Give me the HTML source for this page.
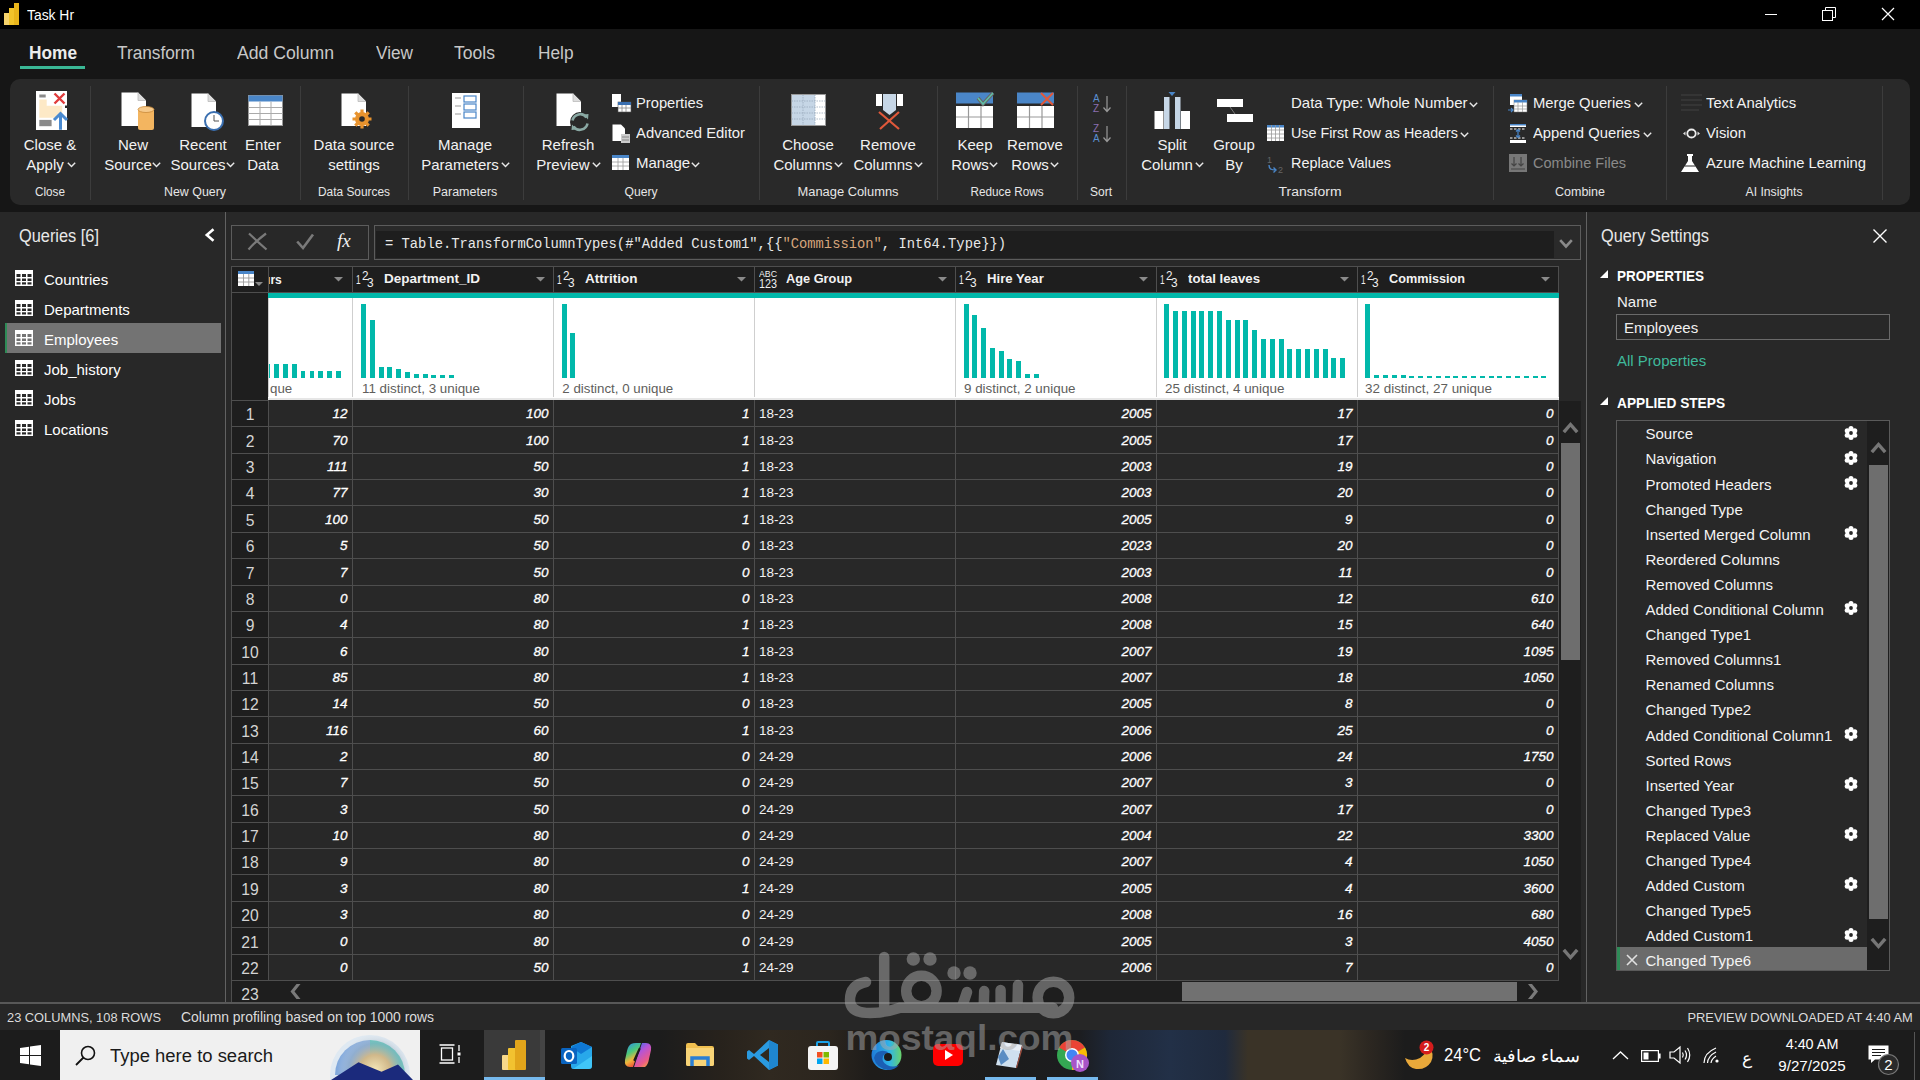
<!DOCTYPE html><html><head><meta charset="utf-8"><style>
*{margin:0;padding:0;box-sizing:border-box}
html,body{width:1920px;height:1080px;overflow:hidden;background:#282828;font-family:"Liberation Sans",sans-serif;}
.a{position:absolute}
.t{position:absolute;white-space:nowrap;line-height:1}
svg.a{overflow:visible}
</style></head><body>
<div class="a" style="left:0px;top:0px;width:1920px;height:29px;background:#000;"></div>
<svg class="a" style="left:3px;top:3px;" width="17" height="22" viewBox="0 0 17 22"><defs><linearGradient id="pbi" x1="0" y1="0" x2="1" y2="1"><stop offset="0" stop-color="#f2c811"/><stop offset="1" stop-color="#e8a30f"/></linearGradient></defs>
<rect x="1" y="10" width="5" height="12" fill="#f6d36b"/><rect x="6" y="5" width="5" height="17" fill="#f2c42a"/><rect x="11" y="0" width="5" height="22" fill="#e9b51b"/></svg>
<div class="t" style="top:8.15px;font-size:14px;color:#fff;left:27px;transform:scaleX(0.9906);transform-origin:left 50%;">Task Hr</div>
<div class="a" style="left:1765px;top:14px;width:12px;height:1px;background:#fff;"></div>
<svg class="a" style="left:1822px;top:7px;" width="14" height="14" viewBox="0 0 14 14"><rect x="0.5" y="3.5" width="10" height="10" fill="none" stroke="#fff" stroke-width="1"/><path d="M3.5 3.5V0.5H13.5V10.5H10.5" fill="none" stroke="#fff" stroke-width="1"/></svg>
<svg class="a" style="left:1882px;top:8px;" width="12" height="12" viewBox="0 0 12 12"><path d="M0 0L12 12M12 0L0 12" stroke="#fff" stroke-width="1.2"/></svg>
<div class="a" style="left:0px;top:29px;width:1920px;height:49px;background:#161616;"></div>
<div class="t" style="top:43.76px;font-size:18px;color:#ececec;font-weight:700;left:28.5px;transform:scaleX(0.9598);transform-origin:left 50%;">Home</div>
<div class="t" style="top:43.76px;font-size:18px;color:#c8c8c8;left:116.5px;transform:scaleX(0.9589);transform-origin:left 50%;">Transform</div>
<div class="t" style="top:43.76px;font-size:18px;color:#c8c8c8;left:236.5px;transform:scaleX(0.9793);transform-origin:left 50%;">Add Column</div>
<div class="t" style="top:43.76px;font-size:18px;color:#c8c8c8;left:376px;transform:scaleX(0.9563);transform-origin:left 50%;">View</div>
<div class="t" style="top:43.76px;font-size:18px;color:#c8c8c8;left:454px;transform:scaleX(0.9757);transform-origin:left 50%;">Tools</div>
<div class="t" style="top:43.76px;font-size:18px;color:#c8c8c8;left:537.5px;transform:scaleX(0.9590);transform-origin:left 50%;">Help</div>
<div class="a" style="left:20px;top:66px;width:65px;height:3px;background:#3ab795;"></div>
<div class="a" style="left:0px;top:78px;width:1920px;height:134px;background:#161616;"></div>
<div class="a" style="left:10px;top:79px;width:1900px;height:126px;background:#292929;border-radius:10px;"></div>
<div class="a" style="left:90px;top:86px;width:1px;height:114px;background:#3c3c3c;"></div>
<div class="a" style="left:300px;top:86px;width:1px;height:114px;background:#3c3c3c;"></div>
<div class="a" style="left:408px;top:86px;width:1px;height:114px;background:#3c3c3c;"></div>
<div class="a" style="left:523px;top:86px;width:1px;height:114px;background:#3c3c3c;"></div>
<div class="a" style="left:759px;top:86px;width:1px;height:114px;background:#3c3c3c;"></div>
<div class="a" style="left:937px;top:86px;width:1px;height:114px;background:#3c3c3c;"></div>
<div class="a" style="left:1077px;top:86px;width:1px;height:114px;background:#3c3c3c;"></div>
<div class="a" style="left:1126px;top:86px;width:1px;height:114px;background:#3c3c3c;"></div>
<div class="a" style="left:1493px;top:86px;width:1px;height:114px;background:#3c3c3c;"></div>
<div class="a" style="left:1666px;top:86px;width:1px;height:114px;background:#3c3c3c;"></div>
<div class="a" style="left:1882px;top:86px;width:1px;height:114px;background:#3c3c3c;"></div>
<svg class="a" style="left:36px;top:91px;" width="32" height="39" viewBox="0 0 32 39"><path d="M0 0H31V14.5H29V17H31V39H0Z" fill="#fff"/>
<rect x="3.3" y="3.5" width="6.4" height="3" fill="#8a8a8a"/><path d="M3.3 8.5H10.7V14.8H26.2V26.8H3.3Z" fill="#fde9c6"/>
<rect x="3.3" y="28.9" width="12.3" height="6.3" fill="#8a8a8a"/>
<path d="M18.5 2.5L28.5 12.5M28.5 2.5L18.5 12.5" stroke="#e03c3c" stroke-width="2.4"/>
<path d="M24.5 38.7V23.5M18 29L24.5 22.5L31 29" stroke="#4a8ad0" stroke-width="3" fill="none"/></svg>
<div class="t" style="top:137.20px;font-size:15px;color:#f2f2f2;left:50px;transform:translateX(-50%);transform-origin:center 50%;">Close &amp;</div>
<div class="t" style="top:157.20px;font-size:15px;color:#f2f2f2;left:45px;transform:translateX(-50%);transform-origin:center 50%;">Apply</div>
<svg class="a" style="left:67px;top:162px;" width="9" height="6" viewBox="0 0 9 6"><path d="M0.8 0.8L4.5 4.6L8.2 0.8" fill="none" stroke="#e8e8e8" stroke-width="1.4"/></svg>
<div class="t" style="top:185.72px;font-size:12.5px;color:#e6e6e6;left:50px;transform:translateX(-50%) scaleX(0.9387);transform-origin:center 50%;">Close</div>
<svg class="a" style="left:121px;top:92px;" width="34" height="40" viewBox="0 0 34 40"><path d="M0.5 0.5H17L25 8.5V34H0.5Z" fill="#fff"/><path d="M17 0.5V8.5H25" fill="#ddd" stroke="#bbb" stroke-width="0.8"/>
<rect x="17" y="17" width="16" height="21" rx="2" fill="#f3b560"/><ellipse cx="25" cy="17.5" rx="8" ry="3" fill="#f6c98a" stroke="#c98a3a" stroke-width="0.8"/></svg>
<div class="t" style="top:137.20px;font-size:15px;color:#f2f2f2;left:133px;transform:translateX(-50%);transform-origin:center 50%;">New</div>
<div class="t" style="top:157.20px;font-size:15px;color:#f2f2f2;left:128px;transform:translateX(-50%);transform-origin:center 50%;">Source</div>
<svg class="a" style="left:152px;top:162px;" width="9" height="6" viewBox="0 0 9 6"><path d="M0.8 0.8L4.5 4.6L8.2 0.8" fill="none" stroke="#e8e8e8" stroke-width="1.4"/></svg>
<svg class="a" style="left:191px;top:93px;" width="34" height="40" viewBox="0 0 34 40"><path d="M0.5 0.5H17L25 8.5V34H0.5Z" fill="#fff"/><path d="M17 0.5V8.5H25" fill="#ddd" stroke="#bbb" stroke-width="0.8"/>
<circle cx="23" cy="28" r="9" fill="#fff" stroke="#3a6fb0" stroke-width="2"/><path d="M23 22V28H28" fill="none" stroke="#555" stroke-width="1"/></svg>
<div class="t" style="top:137.20px;font-size:15px;color:#f2f2f2;left:203px;transform:translateX(-50%);transform-origin:center 50%;">Recent</div>
<div class="t" style="top:157.20px;font-size:15px;color:#f2f2f2;left:198px;transform:translateX(-50%);transform-origin:center 50%;">Sources</div>
<svg class="a" style="left:226px;top:162px;" width="9" height="6" viewBox="0 0 9 6"><path d="M0.8 0.8L4.5 4.6L8.2 0.8" fill="none" stroke="#e8e8e8" stroke-width="1.4"/></svg>
<svg class="a" style="left:248px;top:95px;" width="35" height="31" viewBox="0 0 35 31"><rect x="0.5" y="0.5" width="34" height="30" fill="#fff" stroke="#999" stroke-width="1"/><rect x="0.5" y="0.5" width="34" height="6" fill="#4a86c8"/>
<path d="M0.5 12.5H34.5M0.5 18.5H34.5M0.5 24.5H34.5M12 6.5V30.5M23 6.5V30.5" stroke="#aaa" stroke-width="1"/></svg>
<div class="t" style="top:137.20px;font-size:15px;color:#f2f2f2;left:263px;transform:translateX(-50%);transform-origin:center 50%;">Enter</div>
<div class="t" style="top:157.20px;font-size:15px;color:#f2f2f2;left:263px;transform:translateX(-50%);transform-origin:center 50%;">Data</div>
<div class="t" style="top:185.72px;font-size:12.5px;color:#e6e6e6;left:195px;transform:translateX(-50%) scaleX(0.9917);transform-origin:center 50%;">New Query</div>
<svg class="a" style="left:341px;top:93px;" width="30" height="36" viewBox="0 0 30 36"><path d="M0.5 0.5H17L25 8.5V33H0.5Z" fill="#fff"/><path d="M17 0.5V8.5H25" fill="#ddd" stroke="#bbb" stroke-width="0.8"/>
<g transform="translate(21,26)"><circle r="7" fill="#e8932e"/><path d="M0 -9.5V9.5M-9.5 0H9.5M-6.7 -6.7L6.7 6.7M6.7 -6.7L-6.7 6.7" stroke="#e8932e" stroke-width="3.2"/><circle r="2.8" fill="#292929"/></g></svg>
<div class="t" style="top:137.20px;font-size:15px;color:#f2f2f2;left:354px;transform:translateX(-50%);transform-origin:center 50%;">Data source</div>
<div class="t" style="top:157.20px;font-size:15px;color:#f2f2f2;left:354px;transform:translateX(-50%);transform-origin:center 50%;">settings</div>
<div class="t" style="top:185.72px;font-size:12.5px;color:#e6e6e6;left:354px;transform:translateX(-50%) scaleX(0.9507);transform-origin:center 50%;">Data Sources</div>
<svg class="a" style="left:452px;top:93px;" width="28" height="35" viewBox="0 0 28 35"><rect x="0" y="0" width="28" height="35" fill="#fff"/>
<path d="M3 5H9M3 13H9M3 21H9" stroke="#999" stroke-width="1"/>
<rect x="12" y="3" width="12" height="6" fill="none" stroke="#4a86c8" stroke-width="1.2"/><rect x="12" y="11" width="12" height="6" fill="none" stroke="#4a86c8" stroke-width="1.2"/><rect x="12" y="19" width="12" height="6" fill="none" stroke="#4a86c8" stroke-width="1.2"/></svg>
<div class="t" style="top:137.20px;font-size:15px;color:#f2f2f2;left:465px;transform:translateX(-50%);transform-origin:center 50%;">Manage</div>
<div class="t" style="top:157.20px;font-size:15px;color:#f2f2f2;left:460px;transform:translateX(-50%);transform-origin:center 50%;">Parameters</div>
<svg class="a" style="left:501px;top:162px;" width="9" height="6" viewBox="0 0 9 6"><path d="M0.8 0.8L4.5 4.6L8.2 0.8" fill="none" stroke="#e8e8e8" stroke-width="1.4"/></svg>
<div class="t" style="top:185.72px;font-size:12.5px;color:#e6e6e6;left:465px;transform:translateX(-50%);transform-origin:center 50%;">Parameters</div>
<svg class="a" style="left:556px;top:93px;" width="30" height="36" viewBox="0 0 30 36"><path d="M0.5 0.5H17L25 8.5V33H0.5Z" fill="#fff"/><path d="M17 0.5V8.5H25" fill="#ddd" stroke="#bbb" stroke-width="0.8"/>
<circle cx="24" cy="29" r="10" fill="#292929"/><path d="M16.5 27.5A7.8 7.8 0 0 1 30.5 24.5M31.5 30.5A7.8 7.8 0 0 1 17.5 33.5" fill="none" stroke="#8aa9a4" stroke-width="2.6"/><path d="M27.5 21.5L32.5 21L32 26.5Z M20.5 36.5L15.5 37L16 31.5Z" fill="#8aa9a4"/></svg>
<div class="t" style="top:137.20px;font-size:15px;color:#f2f2f2;left:568px;transform:translateX(-50%);transform-origin:center 50%;">Refresh</div>
<div class="t" style="top:157.20px;font-size:15px;color:#f2f2f2;left:563px;transform:translateX(-50%);transform-origin:center 50%;">Preview</div>
<svg class="a" style="left:592px;top:162px;" width="9" height="6" viewBox="0 0 9 6"><path d="M0.8 0.8L4.5 4.6L8.2 0.8" fill="none" stroke="#e8e8e8" stroke-width="1.4"/></svg>
<svg class="a" style="left:612px;top:94px;" width="19" height="18" viewBox="0 0 19 18"><rect x="0" y="0" width="9" height="13" fill="#fff"/><rect x="6" y="8" width="13" height="10" fill="#fff" stroke="#555" stroke-width="0.6"/><rect x="6" y="8" width="13" height="3" fill="#3a6fb0"/><path d="M6 14H19M10 11V18M14 11V18" stroke="#888" stroke-width="0.8"/></svg>
<div class="t" style="top:95.30px;font-size:15px;color:#f2f2f2;left:636px;transform:scaleX(0.9800);transform-origin:left 50%;">Properties</div>
<svg class="a" style="left:612px;top:124px;" width="19" height="19" viewBox="0 0 19 19"><path d="M0.5 0.5H9L13 4.5V17H0.5Z" fill="#fff"/><rect x="9" y="10" width="9" height="9" fill="#ccc"/><path d="M10 13H17M10 16H17" stroke="#777" stroke-width="0.8"/></svg>
<div class="t" style="top:125.30px;font-size:15px;color:#f2f2f2;left:636px;transform:scaleX(0.9903);transform-origin:left 50%;">Advanced Editor</div>
<svg class="a" style="left:612px;top:155px;" width="17" height="15" viewBox="0 0 17 15"><rect x="0" y="0" width="17" height="15" fill="#fff"/><rect x="0" y="0" width="17" height="3" fill="#4a86c8"/><path d="M0 7H17M0 11H17M6 3V15M11 3V15" stroke="#999" stroke-width="0.8"/></svg>
<div class="t" style="top:155.30px;font-size:15px;color:#f2f2f2;left:636px;">Manage</div>
<svg class="a" style="left:691px;top:162px;" width="9" height="6" viewBox="0 0 9 6"><path d="M0.8 0.8L4.5 4.6L8.2 0.8" fill="none" stroke="#e8e8e8" stroke-width="1.4"/></svg>
<div class="t" style="top:185.72px;font-size:12.5px;color:#e6e6e6;left:641px;transform:translateX(-50%) scaleX(0.9695);transform-origin:center 50%;">Query</div>
<svg class="a" style="left:791px;top:94px;" width="35" height="32" viewBox="0 0 35 32"><rect x="0.5" y="0.5" width="34" height="31" fill="#fff" stroke="#999" stroke-width="1"/><rect x="1" y="1" width="23" height="30" fill="#c6d6e6"/>
<path d="M0.5 7H34.5M0.5 13H34.5M0.5 19H34.5M0.5 25H34.5M12 0.5V31.5M24 0.5V31.5" stroke="#9ab" stroke-width="0.8" stroke-dasharray="1.5 1"/></svg>
<div class="t" style="top:137.20px;font-size:15px;color:#f2f2f2;left:808px;transform:translateX(-50%);transform-origin:center 50%;">Choose</div>
<div class="t" style="top:157.20px;font-size:15px;color:#f2f2f2;left:803px;transform:translateX(-50%);transform-origin:center 50%;">Columns</div>
<svg class="a" style="left:834px;top:162px;" width="9" height="6" viewBox="0 0 9 6"><path d="M0.8 0.8L4.5 4.6L8.2 0.8" fill="none" stroke="#e8e8e8" stroke-width="1.4"/></svg>
<svg class="a" style="left:876px;top:94px;" width="27" height="37" viewBox="0 0 27 37"><rect x="0" y="0" width="6" height="12" fill="#fff"/><rect x="21" y="0" width="6" height="12" fill="#fff"/>
<path d="M7 0H20V16L13.5 21L7 16Z" fill="#c6d6e6"/><path d="M3 18L23 35M23 18L4 35" stroke="#e0583a" stroke-width="2.2"/></svg>
<div class="t" style="top:137.20px;font-size:15px;color:#f2f2f2;left:888px;transform:translateX(-50%);transform-origin:center 50%;">Remove</div>
<div class="t" style="top:157.20px;font-size:15px;color:#f2f2f2;left:883px;transform:translateX(-50%);transform-origin:center 50%;">Columns</div>
<svg class="a" style="left:914px;top:162px;" width="9" height="6" viewBox="0 0 9 6"><path d="M0.8 0.8L4.5 4.6L8.2 0.8" fill="none" stroke="#e8e8e8" stroke-width="1.4"/></svg>
<div class="t" style="top:185.72px;font-size:12.5px;color:#e6e6e6;left:848px;transform:translateX(-50%) scaleX(1.0310);transform-origin:center 50%;">Manage Columns</div>
<svg class="a" style="left:956px;top:92px;" width="38" height="36" viewBox="0 0 38 36"><rect x="0" y="0.5" width="37" height="11" fill="#4a86c8"/><rect x="0" y="14" width="37" height="22" fill="#fff"/>
<path d="M0 25H37M12.5 14V36M25 14V36" stroke="#999" stroke-width="1.2"/>
<path d="M22 6L27 12L37 1" fill="none" stroke="#666" stroke-width="3.6"/><path d="M22 6L27 12L37 1" fill="none" stroke="#5fc0a8" stroke-width="1.6"/></svg>
<div class="t" style="top:137.20px;font-size:15px;color:#f2f2f2;left:975px;transform:translateX(-50%);transform-origin:center 50%;">Keep</div>
<div class="t" style="top:157.20px;font-size:15px;color:#f2f2f2;left:970px;transform:translateX(-50%);transform-origin:center 50%;">Rows</div>
<svg class="a" style="left:989px;top:162px;" width="9" height="6" viewBox="0 0 9 6"><path d="M0.8 0.8L4.5 4.6L8.2 0.8" fill="none" stroke="#e8e8e8" stroke-width="1.4"/></svg>
<svg class="a" style="left:1017px;top:92px;" width="38" height="36" viewBox="0 0 38 36"><rect x="0" y="0.5" width="37" height="11" fill="#4a86c8"/><rect x="0" y="14" width="37" height="22" fill="#fff"/>
<path d="M0 25H37M12.5 14V36M25 14V36" stroke="#999" stroke-width="1.2"/>
<path d="M24 1L36 13M36 1L24 13" stroke="#e0583a" stroke-width="2"/></svg>
<div class="t" style="top:137.20px;font-size:15px;color:#f2f2f2;left:1035px;transform:translateX(-50%);transform-origin:center 50%;">Remove</div>
<div class="t" style="top:157.20px;font-size:15px;color:#f2f2f2;left:1030px;transform:translateX(-50%);transform-origin:center 50%;">Rows</div>
<svg class="a" style="left:1050px;top:162px;" width="9" height="6" viewBox="0 0 9 6"><path d="M0.8 0.8L4.5 4.6L8.2 0.8" fill="none" stroke="#e8e8e8" stroke-width="1.4"/></svg>
<div class="t" style="top:185.72px;font-size:12.5px;color:#e6e6e6;left:1007px;transform:translateX(-50%) scaleX(0.9381);transform-origin:center 50%;">Reduce Rows</div>
<svg class="a" style="left:1093px;top:93px;" width="20" height="52" viewBox="0 0 20 52"><text x="0" y="9" font-family="Liberation Sans" font-size="10" fill="#5b8fd0">A</text><text x="0" y="19" font-family="Liberation Sans" font-size="10" fill="#8a6fb0">Z</text>
<path d="M14 3V18M10.5 14.5L14 18.5L17.5 14.5" fill="none" stroke="#999" stroke-width="1.2"/>
<text x="0" y="39" font-family="Liberation Sans" font-size="10" fill="#8a6fb0">Z</text><text x="0" y="49" font-family="Liberation Sans" font-size="10" fill="#5b8fd0">A</text>
<path d="M14 33V48M10.5 44.5L14 48.5L17.5 44.5" fill="none" stroke="#999" stroke-width="1.2"/></svg>
<div class="t" style="top:185.72px;font-size:12.5px;color:#e6e6e6;left:1101px;transform:translateX(-50%) scaleX(0.9597);transform-origin:center 50%;">Sort</div>
<svg class="a" style="left:1154px;top:91px;" width="37" height="39" viewBox="0 0 37 39"><rect x="0.5" y="20" width="9" height="18" fill="#fff"/><rect x="10" y="6" width="5.5" height="32" fill="#c6d6e6"/><rect x="21" y="6" width="5.5" height="32" fill="#c6d6e6"/><rect x="27" y="20" width="9" height="18" fill="#fff"/>
<path d="M14.5 1H21.5L18 5Z" fill="#4a86c8"/></svg>
<div class="t" style="top:137.20px;font-size:15px;color:#f2f2f2;left:1172px;transform:translateX(-50%);transform-origin:center 50%;">Split</div>
<div class="t" style="top:157.20px;font-size:15px;color:#f2f2f2;left:1167px;transform:translateX(-50%);transform-origin:center 50%;">Column</div>
<svg class="a" style="left:1195px;top:162px;" width="9" height="6" viewBox="0 0 9 6"><path d="M0.8 0.8L4.5 4.6L8.2 0.8" fill="none" stroke="#e8e8e8" stroke-width="1.4"/></svg>
<svg class="a" style="left:1217px;top:99px;" width="37" height="24" viewBox="0 0 37 24"><rect x="0" y="0" width="26" height="8" fill="#fff"/><rect x="10" y="15" width="26" height="8" fill="#fff"/><path d="M13 8L18 15" stroke="#777" stroke-width="1"/></svg>
<div class="t" style="top:137.20px;font-size:15px;color:#f2f2f2;left:1234px;transform:translateX(-50%);transform-origin:center 50%;">Group</div>
<div class="t" style="top:157.20px;font-size:15px;color:#f2f2f2;left:1234px;transform:translateX(-50%);transform-origin:center 50%;">By</div>
<div class="t" style="top:95.30px;font-size:15px;color:#f2f2f2;left:1291px;">Data Type: Whole Number</div>
<svg class="a" style="left:1469px;top:102px;" width="9" height="6" viewBox="0 0 9 6"><path d="M0.8 0.8L4.5 4.6L8.2 0.8" fill="none" stroke="#e8e8e8" stroke-width="1.4"/></svg>
<svg class="a" style="left:1267px;top:125px;" width="17" height="16" viewBox="0 0 17 16"><rect x="0" y="0" width="17" height="16" fill="#fff"/><rect x="0" y="0" width="17" height="2.5" fill="#4a86c8"/><path d="M0 5H17M0 9H17M0 13H17M4.5 0V16M8.5 0V16M12.5 0V16" stroke="#999" stroke-width="0.8"/></svg>
<div class="t" style="top:125.30px;font-size:15px;color:#f2f2f2;left:1291px;transform:scaleX(0.9540);transform-origin:left 50%;">Use First Row as Headers</div>
<svg class="a" style="left:1460px;top:132px;" width="9" height="6" viewBox="0 0 9 6"><path d="M0.8 0.8L4.5 4.6L8.2 0.8" fill="none" stroke="#e8e8e8" stroke-width="1.4"/></svg>
<svg class="a" style="left:1266px;top:154px;" width="20" height="20" viewBox="0 0 20 20"><text x="1" y="9" font-family="Liberation Sans" font-size="9" fill="#666">1</text><text x="12" y="19" font-family="Liberation Sans" font-size="9" fill="#666">2</text><path d="M3 11C3 15 5 16 10 16M7.5 13.5L10 16L7.5 18.5" fill="none" stroke="#4a86c8" stroke-width="1.4"/></svg>
<div class="t" style="top:155.30px;font-size:15px;color:#f2f2f2;left:1291px;transform:scaleX(0.9620);transform-origin:left 50%;">Replace Values</div>
<div class="t" style="top:185.72px;font-size:12.5px;color:#e6e6e6;left:1310px;transform:translateX(-50%) scaleX(1.1153);transform-origin:center 50%;">Transform</div>
<svg class="a" style="left:1508px;top:94px;" width="20" height="19" viewBox="0 0 20 19"><rect x="2" y="0" width="12" height="11" fill="#fff"/><rect x="2" y="0" width="12" height="2.5" fill="#4a86c8"/><rect x="6" y="6" width="13" height="12" fill="#fff" stroke="#777" stroke-width="0.5"/><rect x="6" y="6" width="13" height="2.5" fill="#4a86c8"/><path d="M6 12H19M6 15H19M10 8V18M14.5 8V18" stroke="#999" stroke-width="0.7"/><path d="M0 16H5M3 14L5 16L3 18" fill="none" stroke="#4a86c8" stroke-width="1.2"/></svg>
<div class="t" style="top:95.30px;font-size:15px;color:#f2f2f2;left:1533px;transform:scaleX(0.9878);transform-origin:left 50%;">Merge Queries</div>
<svg class="a" style="left:1634px;top:102px;" width="9" height="6" viewBox="0 0 9 6"><path d="M0.8 0.8L4.5 4.6L8.2 0.8" fill="none" stroke="#e8e8e8" stroke-width="1.4"/></svg>
<svg class="a" style="left:1510px;top:124px;" width="16" height="19" viewBox="0 0 16 19"><rect x="0" y="0" width="16" height="3" fill="#fff"/><rect x="0" y="0" width="16" height="1.5" fill="#4a86c8"/><rect x="0" y="16" width="16" height="3" fill="#fff"/><path d="M0 5H16M0 14H16" stroke="#fff" stroke-width="1.2" stroke-dasharray="2.5 1.5"/><path d="M8 5.5V13.5M6 7.5L8 5.5L10 7.5M6 11.5L8 13.5L10 11.5" fill="none" stroke="#4a86c8" stroke-width="1.2"/></svg>
<div class="t" style="top:125.30px;font-size:15px;color:#f2f2f2;left:1533px;transform:scaleX(0.9870);transform-origin:left 50%;">Append Queries</div>
<svg class="a" style="left:1643px;top:132px;" width="9" height="6" viewBox="0 0 9 6"><path d="M0.8 0.8L4.5 4.6L8.2 0.8" fill="none" stroke="#e8e8e8" stroke-width="1.4"/></svg>
<svg class="a" style="left:1509px;top:154px;" width="18" height="18" viewBox="0 0 18 18"><rect x="0" y="0" width="18" height="18" fill="#777"/><path d="M5 3V12M2.5 9.5L5 12L7.5 9.5M12 3V12M9.5 9.5L12 12L14.5 9.5M2 15H16" fill="none" stroke="#444" stroke-width="1.2"/></svg>
<div class="t" style="top:155.30px;font-size:15px;color:#8a8a8a;left:1533px;transform:scaleX(0.9701);transform-origin:left 50%;">Combine Files</div>
<div class="t" style="top:185.72px;font-size:12.5px;color:#e6e6e6;left:1580px;transform:translateX(-50%);transform-origin:center 50%;">Combine</div>
<svg class="a" style="left:1681px;top:94px;" width="21" height="18" viewBox="0 0 21 18"><path d="M0 1H21M0 6H21M0 11H21M0 16H18" stroke="#3a3a3a" stroke-width="1.5"/></svg>
<div class="t" style="top:95.30px;font-size:15px;color:#f2f2f2;left:1706px;transform:scaleX(0.9924);transform-origin:left 50%;">Text Analytics</div>
<svg class="a" style="left:1683px;top:129px;" width="17" height="9" viewBox="0 0 17 9"><ellipse cx="8.5" cy="4.5" rx="4.2" ry="4" fill="none" stroke="#eee" stroke-width="1.8"/><path d="M0 4.5L2.5 2.5V6.5Z M17 4.5L14.5 2.5V6.5Z" fill="#ddd"/></svg>
<div class="t" style="top:125.30px;font-size:15px;color:#f2f2f2;left:1706px;transform:scaleX(0.9856);transform-origin:left 50%;">Vision</div>
<svg class="a" style="left:1681px;top:154px;" width="18" height="19" viewBox="0 0 18 19"><path d="M6 0H12V2H11V7L18 18H0L7 7V2H6Z" fill="#fff"/><path d="M3.5 12H14.5" stroke="#292929" stroke-width="1"/></svg>
<div class="t" style="top:155.30px;font-size:15px;color:#f2f2f2;left:1706px;transform:scaleX(0.9840);transform-origin:left 50%;">Azure Machine Learning</div>
<div class="t" style="top:185.72px;font-size:12.5px;color:#e6e6e6;left:1774px;transform:translateX(-50%) scaleX(0.9767);transform-origin:center 50%;">AI Insights</div>
<div class="a" style="left:0px;top:212px;width:1920px;height:790px;background:#282828;"></div>
<div class="a" style="left:225px;top:212px;width:1px;height:790px;background:#626262;"></div>
<div class="a" style="left:1586px;top:212px;width:1px;height:790px;background:#626262;"></div>
<div class="t" style="top:227.06px;font-size:18px;color:#e8e8e8;left:19px;transform:scaleX(0.9087);transform-origin:left 50%;">Queries [6]</div>
<svg class="a" style="left:204px;top:228px;" width="11" height="14" viewBox="0 0 11 14"><path d="M9.5 1.2L2.8 7L9.5 12.8" fill="none" stroke="#fff" stroke-width="2.6"/></svg>
<div class="a" style="left:5px;top:323px;width:216px;height:30px;background:#737373;"></div>
<div class="a" style="left:5px;top:323px;width:2px;height:30px;background:#2e8b57;"></div>
<svg class="a" style="left:15px;top:270.0px;" width="18" height="16" viewBox="0 0 18 16"><rect x="0" y="0" width="18" height="16" fill="#fff"/><rect x="1.5" y="4" width="4" height="3" fill="#282828"/><rect x="7" y="4" width="4" height="3" fill="#282828"/><rect x="12.5" y="4" width="4" height="3" fill="#282828"/><rect x="1.5" y="8.5" width="4" height="2.5" fill="#282828"/><rect x="7" y="8.5" width="4" height="2.5" fill="#282828"/><rect x="12.5" y="8.5" width="4" height="2.5" fill="#282828"/><rect x="1.5" y="12.3" width="4" height="2.2" fill="#282828"/><rect x="7" y="12.3" width="4" height="2.2" fill="#282828"/><rect x="12.5" y="12.3" width="4" height="2.2" fill="#282828"/></svg>
<div class="t" style="top:271.50px;font-size:15px;color:#fff;left:44px;">Countries</div>
<svg class="a" style="left:15px;top:300.0px;" width="18" height="16" viewBox="0 0 18 16"><rect x="0" y="0" width="18" height="16" fill="#fff"/><rect x="1.5" y="4" width="4" height="3" fill="#282828"/><rect x="7" y="4" width="4" height="3" fill="#282828"/><rect x="12.5" y="4" width="4" height="3" fill="#282828"/><rect x="1.5" y="8.5" width="4" height="2.5" fill="#282828"/><rect x="7" y="8.5" width="4" height="2.5" fill="#282828"/><rect x="12.5" y="8.5" width="4" height="2.5" fill="#282828"/><rect x="1.5" y="12.3" width="4" height="2.2" fill="#282828"/><rect x="7" y="12.3" width="4" height="2.2" fill="#282828"/><rect x="12.5" y="12.3" width="4" height="2.2" fill="#282828"/></svg>
<div class="t" style="top:301.50px;font-size:15px;color:#fff;left:44px;">Departments</div>
<svg class="a" style="left:15px;top:330.0px;" width="18" height="16" viewBox="0 0 18 16"><rect x="0" y="0" width="18" height="16" fill="#fff"/><rect x="1.5" y="4" width="4" height="3" fill="#737373"/><rect x="7" y="4" width="4" height="3" fill="#737373"/><rect x="12.5" y="4" width="4" height="3" fill="#737373"/><rect x="1.5" y="8.5" width="4" height="2.5" fill="#737373"/><rect x="7" y="8.5" width="4" height="2.5" fill="#737373"/><rect x="12.5" y="8.5" width="4" height="2.5" fill="#737373"/><rect x="1.5" y="12.3" width="4" height="2.2" fill="#737373"/><rect x="7" y="12.3" width="4" height="2.2" fill="#737373"/><rect x="12.5" y="12.3" width="4" height="2.2" fill="#737373"/></svg>
<div class="t" style="top:331.50px;font-size:15px;color:#fff;left:44px;">Employees</div>
<svg class="a" style="left:15px;top:360.0px;" width="18" height="16" viewBox="0 0 18 16"><rect x="0" y="0" width="18" height="16" fill="#fff"/><rect x="1.5" y="4" width="4" height="3" fill="#282828"/><rect x="7" y="4" width="4" height="3" fill="#282828"/><rect x="12.5" y="4" width="4" height="3" fill="#282828"/><rect x="1.5" y="8.5" width="4" height="2.5" fill="#282828"/><rect x="7" y="8.5" width="4" height="2.5" fill="#282828"/><rect x="12.5" y="8.5" width="4" height="2.5" fill="#282828"/><rect x="1.5" y="12.3" width="4" height="2.2" fill="#282828"/><rect x="7" y="12.3" width="4" height="2.2" fill="#282828"/><rect x="12.5" y="12.3" width="4" height="2.2" fill="#282828"/></svg>
<div class="t" style="top:361.50px;font-size:15px;color:#fff;left:44px;">Job_history</div>
<svg class="a" style="left:15px;top:390.0px;" width="18" height="16" viewBox="0 0 18 16"><rect x="0" y="0" width="18" height="16" fill="#fff"/><rect x="1.5" y="4" width="4" height="3" fill="#282828"/><rect x="7" y="4" width="4" height="3" fill="#282828"/><rect x="12.5" y="4" width="4" height="3" fill="#282828"/><rect x="1.5" y="8.5" width="4" height="2.5" fill="#282828"/><rect x="7" y="8.5" width="4" height="2.5" fill="#282828"/><rect x="12.5" y="8.5" width="4" height="2.5" fill="#282828"/><rect x="1.5" y="12.3" width="4" height="2.2" fill="#282828"/><rect x="7" y="12.3" width="4" height="2.2" fill="#282828"/><rect x="12.5" y="12.3" width="4" height="2.2" fill="#282828"/></svg>
<div class="t" style="top:391.50px;font-size:15px;color:#fff;left:44px;">Jobs</div>
<svg class="a" style="left:15px;top:420.0px;" width="18" height="16" viewBox="0 0 18 16"><rect x="0" y="0" width="18" height="16" fill="#fff"/><rect x="1.5" y="4" width="4" height="3" fill="#282828"/><rect x="7" y="4" width="4" height="3" fill="#282828"/><rect x="12.5" y="4" width="4" height="3" fill="#282828"/><rect x="1.5" y="8.5" width="4" height="2.5" fill="#282828"/><rect x="7" y="8.5" width="4" height="2.5" fill="#282828"/><rect x="12.5" y="8.5" width="4" height="2.5" fill="#282828"/><rect x="1.5" y="12.3" width="4" height="2.2" fill="#282828"/><rect x="7" y="12.3" width="4" height="2.2" fill="#282828"/><rect x="12.5" y="12.3" width="4" height="2.2" fill="#282828"/></svg>
<div class="t" style="top:421.50px;font-size:15px;color:#fff;left:44px;">Locations</div>
<div class="a" style="left:231px;top:225px;width:138px;height:35px;border:1px solid #5c5c5c;"></div>
<svg class="a" style="left:247px;top:232px;" width="21" height="19" viewBox="0 0 21 19"><path d="M2 1.5Q10 9 19.5 17.5M19 1.5Q9 9 1.5 17.5" fill="none" stroke="#7a7a7a" stroke-width="2.2"/></svg>
<svg class="a" style="left:296px;top:233px;" width="18" height="16" viewBox="0 0 18 16"><path d="M1.2 8.5L7 15L17 1.5" fill="none" stroke="#7a7a7a" stroke-width="2.6"/></svg>
<div class="t" style="top:231.09px;font-size:19px;color:#f0f0f0;font-family:'Liberation Serif';left:337px;"><i>fx</i></div>
<div class="a" style="left:374px;top:225px;width:1207px;height:35px;background:#2a2a2a;border:1px solid #5c5c5c;"></div>
<div class="a" style="left:376px;top:231px;width:1178px;height:27px;background:#1e1e1e;"></div>
<div class="t" style="top:237.27px;font-size:14px;color:#e8e8e8;font-family:'Liberation Mono';left:385px;transform:scaleX(0.9856);transform-origin:left 50%;">= Table.TransformColumnTypes(#"Added Custom1",{{<span style="color:#d6a57c">"Commission"</span>, Int64.Type}})</div>
<svg class="a" style="left:1559px;top:239px;" width="14" height="10" viewBox="0 0 14 10"><path d="M1.2 1.2L7 7.5L12.8 1.2" fill="none" stroke="#8a8a8a" stroke-width="2.6"/></svg>
<div class="a" style="left:231px;top:266px;width:1328px;height:27px;background:#1e1e1e;"></div>
<div class="a" style="left:231px;top:266px;width:1328px;height:1px;background:#4e4e4e;"></div>
<div class="a" style="left:231px;top:292px;width:1328px;height:1px;background:#4e4e4e;"></div>
<div class="a" style="left:268px;top:293px;width:1291px;height:5px;background:#01b8aa;"></div>
<div class="a" style="left:268px;top:298px;width:1291px;height:100px;background:#ffffff;"></div>
<div class="a" style="left:268px;top:398px;width:1291px;height:3px;background:#e6e6e6;"></div>
<div class="a" style="left:231px;top:293px;width:37px;height:108px;background:#1e1e1e;"></div>
<div class="a" style="left:231px;top:400px;width:37px;height:602px;background:#1e1e1e;"></div>
<div class="a" style="left:268px;top:400px;width:1291px;height:580px;background:#282828;"></div>
<svg class="a" style="left:238px;top:271px;" width="26" height="16" viewBox="0 0 26 16"><rect x="0" y="0" width="16" height="15" fill="#fff"/><rect x="0" y="0" width="16" height="3" fill="#4a86c8"/><path d="M0 7H16M0 11H16M5.5 3V15M10.8 3V15" stroke="#9a9a9a" stroke-width="0.9"/><path d="M17 11H25L21 15Z" fill="#8a8a8a"/></svg>
<div class="a" style="left:268px;top:266px;width:1px;height:27px;background:#4e4e4e;"></div>
<div class="a" style="left:268px;top:298px;width:1px;height:99px;background:#cfcfcf;"></div>
<div class="a" style="left:268px;top:400px;width:1px;height:580px;background:#4e4e4e;"></div>
<div class="a" style="left:352.0px;top:266px;width:1px;height:27px;background:#4e4e4e;"></div>
<div class="a" style="left:352.0px;top:298px;width:1px;height:99px;background:#cfcfcf;"></div>
<div class="a" style="left:352.0px;top:400px;width:1px;height:580px;background:#4e4e4e;"></div>
<div class="a" style="left:553.0px;top:266px;width:1px;height:27px;background:#4e4e4e;"></div>
<div class="a" style="left:553.0px;top:298px;width:1px;height:99px;background:#cfcfcf;"></div>
<div class="a" style="left:553.0px;top:400px;width:1px;height:580px;background:#4e4e4e;"></div>
<div class="a" style="left:754.0px;top:266px;width:1px;height:27px;background:#4e4e4e;"></div>
<div class="a" style="left:754.0px;top:298px;width:1px;height:99px;background:#cfcfcf;"></div>
<div class="a" style="left:754.0px;top:400px;width:1px;height:580px;background:#4e4e4e;"></div>
<div class="a" style="left:955.0px;top:266px;width:1px;height:27px;background:#4e4e4e;"></div>
<div class="a" style="left:955.0px;top:298px;width:1px;height:99px;background:#cfcfcf;"></div>
<div class="a" style="left:955.0px;top:400px;width:1px;height:580px;background:#4e4e4e;"></div>
<div class="a" style="left:1156.0px;top:266px;width:1px;height:27px;background:#4e4e4e;"></div>
<div class="a" style="left:1156.0px;top:298px;width:1px;height:99px;background:#cfcfcf;"></div>
<div class="a" style="left:1156.0px;top:400px;width:1px;height:580px;background:#4e4e4e;"></div>
<div class="a" style="left:1357.0px;top:266px;width:1px;height:27px;background:#4e4e4e;"></div>
<div class="a" style="left:1357.0px;top:298px;width:1px;height:99px;background:#cfcfcf;"></div>
<div class="a" style="left:1357.0px;top:400px;width:1px;height:580px;background:#4e4e4e;"></div>
<div class="a" style="left:1558.0px;top:266px;width:1px;height:27px;background:#4e4e4e;"></div>
<div class="a" style="left:1558.0px;top:298px;width:1px;height:99px;background:#cfcfcf;"></div>
<div class="a" style="left:1558.0px;top:400px;width:1px;height:580px;background:#4e4e4e;"></div>
<div class="a" style="left:231px;top:266px;width:1px;height:736px;background:#4e4e4e;"></div>
<div class="a" style="left:269px;top:266px;width:60px;height:26px;overflow:hidden">
<div class="t" style="top:6.57px;font-size:13.5px;color:#f2f2f2;font-weight:700;left:-6px;transform:scaleX(0.8949);transform-origin:left 50%;">urs</div>
</div>
<svg class="a" style="left:334px;top:277px;" width="9" height="5" viewBox="0 0 9 5"><path d="M0 0H9L4.5 4.5Z" fill="#8a8a8a"/></svg>
<div class="t" style="top:274.42px;font-size:12.5px;color:#f0f0f0;left:356.0px;transform:scaleX(0.6617);transform-origin:left 50%;">1</div>
<div class="t" style="top:269.92px;font-size:12.5px;color:#f0f0f0;left:361.5px;transform:scaleX(0.9350);transform-origin:left 50%;">2</div>
<div class="t" style="top:277.22px;font-size:12.5px;color:#f0f0f0;left:367.2px;transform:scaleX(0.9494);transform-origin:left 50%;">3</div>
<div class="t" style="top:272.37px;font-size:13.5px;color:#f2f2f2;font-weight:700;left:384.0px;">Department_ID</div>
<svg class="a" style="left:535.5px;top:277px;" width="9" height="5" viewBox="0 0 9 5"><path d="M0 0H9L4.5 4.5Z" fill="#8a8a8a"/></svg>
<div class="t" style="top:274.42px;font-size:12.5px;color:#f0f0f0;left:557.0px;transform:scaleX(0.6617);transform-origin:left 50%;">1</div>
<div class="t" style="top:269.92px;font-size:12.5px;color:#f0f0f0;left:562.5px;transform:scaleX(0.9350);transform-origin:left 50%;">2</div>
<div class="t" style="top:277.22px;font-size:12.5px;color:#f0f0f0;left:568.2px;transform:scaleX(0.9494);transform-origin:left 50%;">3</div>
<div class="t" style="top:272.37px;font-size:13.5px;color:#f2f2f2;font-weight:700;left:585.0px;">Attrition</div>
<svg class="a" style="left:736.5px;top:277px;" width="9" height="5" viewBox="0 0 9 5"><path d="M0 0H9L4.5 4.5Z" fill="#8a8a8a"/></svg>
<div class="t" style="top:268.76px;font-size:9.5px;color:#f0f0f0;left:758.8px;transform:scaleX(0.9215);transform-origin:left 50%;">ABC</div>
<div class="t" style="top:277.64px;font-size:12px;color:#f0f0f0;left:758.8px;transform:scaleX(0.8990);transform-origin:left 50%;">123</div>
<div class="t" style="top:272.37px;font-size:13.5px;color:#f2f2f2;font-weight:700;left:785.5px;transform:scaleX(0.9463);transform-origin:left 50%;">Age Group</div>
<svg class="a" style="left:937.5px;top:277px;" width="9" height="5" viewBox="0 0 9 5"><path d="M0 0H9L4.5 4.5Z" fill="#8a8a8a"/></svg>
<div class="t" style="top:274.42px;font-size:12.5px;color:#f0f0f0;left:959.0px;transform:scaleX(0.6617);transform-origin:left 50%;">1</div>
<div class="t" style="top:269.92px;font-size:12.5px;color:#f0f0f0;left:964.5px;transform:scaleX(0.9350);transform-origin:left 50%;">2</div>
<div class="t" style="top:277.22px;font-size:12.5px;color:#f0f0f0;left:970.2px;transform:scaleX(0.9494);transform-origin:left 50%;">3</div>
<div class="t" style="top:272.37px;font-size:13.5px;color:#f2f2f2;font-weight:700;left:987.0px;transform:scaleX(0.9737);transform-origin:left 50%;">Hire Year</div>
<svg class="a" style="left:1138.5px;top:277px;" width="9" height="5" viewBox="0 0 9 5"><path d="M0 0H9L4.5 4.5Z" fill="#8a8a8a"/></svg>
<div class="t" style="top:274.42px;font-size:12.5px;color:#f0f0f0;left:1160.0px;transform:scaleX(0.6617);transform-origin:left 50%;">1</div>
<div class="t" style="top:269.92px;font-size:12.5px;color:#f0f0f0;left:1165.5px;transform:scaleX(0.9350);transform-origin:left 50%;">2</div>
<div class="t" style="top:277.22px;font-size:12.5px;color:#f0f0f0;left:1171.2px;transform:scaleX(0.9494);transform-origin:left 50%;">3</div>
<div class="t" style="top:272.37px;font-size:13.5px;color:#f2f2f2;font-weight:700;left:1188.0px;transform:scaleX(0.9791);transform-origin:left 50%;">total leaves</div>
<svg class="a" style="left:1339.5px;top:277px;" width="9" height="5" viewBox="0 0 9 5"><path d="M0 0H9L4.5 4.5Z" fill="#8a8a8a"/></svg>
<div class="t" style="top:274.42px;font-size:12.5px;color:#f0f0f0;left:1361.0px;transform:scaleX(0.6617);transform-origin:left 50%;">1</div>
<div class="t" style="top:269.92px;font-size:12.5px;color:#f0f0f0;left:1366.5px;transform:scaleX(0.9350);transform-origin:left 50%;">2</div>
<div class="t" style="top:277.22px;font-size:12.5px;color:#f0f0f0;left:1372.2px;transform:scaleX(0.9494);transform-origin:left 50%;">3</div>
<div class="t" style="top:272.37px;font-size:13.5px;color:#f2f2f2;font-weight:700;left:1389.0px;transform:scaleX(0.9381);transform-origin:left 50%;">Commission</div>
<svg class="a" style="left:1540.5px;top:277px;" width="9" height="5" viewBox="0 0 9 5"><path d="M0 0H9L4.5 4.5Z" fill="#8a8a8a"/></svg>
<div class="a" style="left:269px;top:364px;width:1px;height:14px;background:#01b8aa;"></div>
<div class="a" style="left:274.2px;top:364px;width:4.7px;height:14px;background:#01b8aa;"></div>
<div class="a" style="left:283.03999999999996px;top:364px;width:4.7px;height:14px;background:#01b8aa;"></div>
<div class="a" style="left:291.88px;top:364px;width:4.7px;height:14px;background:#01b8aa;"></div>
<div class="a" style="left:300.71999999999997px;top:371px;width:4.7px;height:7px;background:#01b8aa;"></div>
<div class="a" style="left:309.56px;top:371px;width:4.7px;height:7px;background:#01b8aa;"></div>
<div class="a" style="left:318.4px;top:371px;width:4.7px;height:7px;background:#01b8aa;"></div>
<div class="a" style="left:327.24px;top:371px;width:4.7px;height:7px;background:#01b8aa;"></div>
<div class="a" style="left:336.08px;top:371px;width:4.7px;height:7px;background:#01b8aa;"></div>
<div class="a" style="left:361.0px;top:304px;width:5px;height:74px;background:#01b8aa;"></div>
<div class="a" style="left:369.8px;top:320px;width:5px;height:58px;background:#01b8aa;"></div>
<div class="a" style="left:378.6px;top:367px;width:5px;height:11px;background:#01b8aa;"></div>
<div class="a" style="left:387.4px;top:367px;width:5px;height:11px;background:#01b8aa;"></div>
<div class="a" style="left:396.2px;top:369px;width:5px;height:9px;background:#01b8aa;"></div>
<div class="a" style="left:405.0px;top:372px;width:5px;height:6px;background:#01b8aa;"></div>
<div class="a" style="left:413.8px;top:374px;width:5px;height:4px;background:#01b8aa;"></div>
<div class="a" style="left:422.6px;top:374px;width:5px;height:4px;background:#01b8aa;"></div>
<div class="a" style="left:431.4px;top:375px;width:5px;height:3px;background:#01b8aa;"></div>
<div class="a" style="left:440.2px;top:375px;width:5px;height:3px;background:#01b8aa;"></div>
<div class="a" style="left:449.0px;top:375px;width:5px;height:3px;background:#01b8aa;"></div>
<div class="a" style="left:562px;top:304px;width:5px;height:74px;background:#01b8aa;"></div>
<div class="a" style="left:570px;top:333px;width:5px;height:45px;background:#01b8aa;"></div>
<div class="a" style="left:964px;top:304px;width:5px;height:74px;background:#01b8aa;"></div>
<div class="a" style="left:972px;top:315px;width:5px;height:63px;background:#01b8aa;"></div>
<div class="a" style="left:981px;top:328px;width:5px;height:50px;background:#01b8aa;"></div>
<div class="a" style="left:990px;top:348px;width:5px;height:30px;background:#01b8aa;"></div>
<div class="a" style="left:999px;top:351px;width:5px;height:27px;background:#01b8aa;"></div>
<div class="a" style="left:1007px;top:359px;width:5px;height:19px;background:#01b8aa;"></div>
<div class="a" style="left:1016px;top:361px;width:5px;height:17px;background:#01b8aa;"></div>
<div class="a" style="left:1025px;top:374px;width:5px;height:4px;background:#01b8aa;"></div>
<div class="a" style="left:1034px;top:374px;width:5px;height:4px;background:#01b8aa;"></div>
<div class="a" style="left:1164.1px;top:304px;width:5px;height:74px;background:#01b8aa;"></div>
<div class="a" style="left:1172.8999999999999px;top:311px;width:5px;height:67px;background:#01b8aa;"></div>
<div class="a" style="left:1181.6999999999998px;top:311px;width:5px;height:67px;background:#01b8aa;"></div>
<div class="a" style="left:1190.5px;top:311px;width:5px;height:67px;background:#01b8aa;"></div>
<div class="a" style="left:1199.3px;top:311px;width:5px;height:67px;background:#01b8aa;"></div>
<div class="a" style="left:1208.1px;top:311px;width:5px;height:67px;background:#01b8aa;"></div>
<div class="a" style="left:1216.8999999999999px;top:311px;width:5px;height:67px;background:#01b8aa;"></div>
<div class="a" style="left:1225.6999999999998px;top:320px;width:5px;height:58px;background:#01b8aa;"></div>
<div class="a" style="left:1234.5px;top:320px;width:5px;height:58px;background:#01b8aa;"></div>
<div class="a" style="left:1243.3px;top:320px;width:5px;height:58px;background:#01b8aa;"></div>
<div class="a" style="left:1252.1px;top:330px;width:5px;height:48px;background:#01b8aa;"></div>
<div class="a" style="left:1260.8999999999999px;top:339px;width:5px;height:39px;background:#01b8aa;"></div>
<div class="a" style="left:1269.6999999999998px;top:339px;width:5px;height:39px;background:#01b8aa;"></div>
<div class="a" style="left:1278.5px;top:339px;width:5px;height:39px;background:#01b8aa;"></div>
<div class="a" style="left:1287.3px;top:349px;width:5px;height:29px;background:#01b8aa;"></div>
<div class="a" style="left:1296.1px;top:349px;width:5px;height:29px;background:#01b8aa;"></div>
<div class="a" style="left:1304.8999999999999px;top:349px;width:5px;height:29px;background:#01b8aa;"></div>
<div class="a" style="left:1313.6999999999998px;top:349px;width:5px;height:29px;background:#01b8aa;"></div>
<div class="a" style="left:1322.5px;top:349px;width:5px;height:29px;background:#01b8aa;"></div>
<div class="a" style="left:1331.3px;top:358px;width:5px;height:20px;background:#01b8aa;"></div>
<div class="a" style="left:1340.1px;top:358px;width:5px;height:20px;background:#01b8aa;"></div>
<div class="a" style="left:1365px;top:304px;width:5px;height:74px;background:#01b8aa;"></div>
<div class="a" style="left:1374.0px;top:375px;width:5px;height:3px;background:#01b8aa;"></div>
<div class="a" style="left:1382.9px;top:375px;width:5px;height:3px;background:#01b8aa;"></div>
<div class="a" style="left:1391.8px;top:375px;width:5px;height:3px;background:#01b8aa;"></div>
<div class="a" style="left:1400.7px;top:375px;width:5px;height:3px;background:#01b8aa;"></div>
<div class="a" style="left:1409.3px;top:376px;width:5px;height:2px;background:#01b8aa;"></div>
<div class="a" style="left:1418.1px;top:376px;width:5px;height:2px;background:#01b8aa;"></div>
<div class="a" style="left:1426.8999999999999px;top:376px;width:5px;height:2px;background:#01b8aa;"></div>
<div class="a" style="left:1435.7px;top:376px;width:5px;height:2px;background:#01b8aa;"></div>
<div class="a" style="left:1444.5px;top:376px;width:5px;height:2px;background:#01b8aa;"></div>
<div class="a" style="left:1453.3px;top:376px;width:5px;height:2px;background:#01b8aa;"></div>
<div class="a" style="left:1462.1px;top:376px;width:5px;height:2px;background:#01b8aa;"></div>
<div class="a" style="left:1470.8999999999999px;top:376px;width:5px;height:2px;background:#01b8aa;"></div>
<div class="a" style="left:1479.7px;top:376px;width:5px;height:2px;background:#01b8aa;"></div>
<div class="a" style="left:1488.5px;top:376px;width:5px;height:2px;background:#01b8aa;"></div>
<div class="a" style="left:1497.3px;top:376px;width:5px;height:2px;background:#01b8aa;"></div>
<div class="a" style="left:1506.1px;top:376px;width:5px;height:2px;background:#01b8aa;"></div>
<div class="a" style="left:1514.8999999999999px;top:376px;width:5px;height:2px;background:#01b8aa;"></div>
<div class="a" style="left:1523.7px;top:376px;width:5px;height:2px;background:#01b8aa;"></div>
<div class="a" style="left:1532.5px;top:376px;width:5px;height:2px;background:#01b8aa;"></div>
<div class="a" style="left:1541.3px;top:376px;width:5px;height:2px;background:#01b8aa;"></div>
<div class="t" style="top:382.24px;font-size:13.3px;color:#605e5c;left:270px;">que</div>
<div class="t" style="top:382.24px;font-size:13.3px;color:#605e5c;left:362px;transform:scaleX(1.0061);transform-origin:left 50%;">11 distinct, 3 unique</div>
<div class="t" style="top:382.24px;font-size:13.3px;color:#605e5c;left:562.3px;">2 distinct, 0 unique</div>
<div class="t" style="top:382.24px;font-size:13.3px;color:#605e5c;left:964px;transform:scaleX(1.0056);transform-origin:left 50%;">9 distinct, 2 unique</div>
<div class="t" style="top:382.24px;font-size:13.3px;color:#605e5c;left:1165px;transform:scaleX(1.0103);transform-origin:left 50%;">25 distinct, 4 unique</div>
<div class="t" style="top:382.24px;font-size:13.3px;color:#605e5c;left:1365px;transform:scaleX(1.0106);transform-origin:left 50%;">32 distinct, 27 unique</div>
<div class="a" style="left:231px;top:426px;width:1328px;height:1px;background:#4e4e4e;"></div>
<div class="t" style="top:406.91px;font-size:15.7px;color:#d4d4d4;left:250px;transform:translateX(-50%);transform-origin:center 50%;">1</div>
<div class="t" style="top:406.57px;font-size:13.5px;color:#ffffff;font-style:italic;right:1572.5px;-webkit-text-stroke:0.3px #fff;">12</div>
<div class="t" style="top:406.57px;font-size:13.5px;color:#ffffff;font-style:italic;right:1371.5px;-webkit-text-stroke:0.3px #fff;">100</div>
<div class="t" style="top:406.57px;font-size:13.5px;color:#ffffff;font-style:italic;right:1170.5px;-webkit-text-stroke:0.3px #fff;">1</div>
<div class="t" style="top:406.57px;font-size:13.5px;color:#f2f2f2;left:759px;">18-23</div>
<div class="t" style="top:406.57px;font-size:13.5px;color:#ffffff;font-style:italic;right:768.5px;-webkit-text-stroke:0.3px #fff;">2005</div>
<div class="t" style="top:406.57px;font-size:13.5px;color:#ffffff;font-style:italic;right:567.5px;-webkit-text-stroke:0.3px #fff;">17</div>
<div class="t" style="top:406.57px;font-size:13.5px;color:#ffffff;font-style:italic;right:366.5px;-webkit-text-stroke:0.3px #fff;">0</div>
<div class="a" style="left:231px;top:453px;width:1328px;height:1px;background:#4e4e4e;"></div>
<div class="t" style="top:433.91px;font-size:15.7px;color:#d4d4d4;left:250px;transform:translateX(-50%);transform-origin:center 50%;">2</div>
<div class="t" style="top:433.57px;font-size:13.5px;color:#ffffff;font-style:italic;right:1572.5px;-webkit-text-stroke:0.3px #fff;">70</div>
<div class="t" style="top:433.57px;font-size:13.5px;color:#ffffff;font-style:italic;right:1371.5px;-webkit-text-stroke:0.3px #fff;">100</div>
<div class="t" style="top:433.57px;font-size:13.5px;color:#ffffff;font-style:italic;right:1170.5px;-webkit-text-stroke:0.3px #fff;">1</div>
<div class="t" style="top:433.57px;font-size:13.5px;color:#f2f2f2;left:759px;">18-23</div>
<div class="t" style="top:433.57px;font-size:13.5px;color:#ffffff;font-style:italic;right:768.5px;-webkit-text-stroke:0.3px #fff;">2005</div>
<div class="t" style="top:433.57px;font-size:13.5px;color:#ffffff;font-style:italic;right:567.5px;-webkit-text-stroke:0.3px #fff;">17</div>
<div class="t" style="top:433.57px;font-size:13.5px;color:#ffffff;font-style:italic;right:366.5px;-webkit-text-stroke:0.3px #fff;">0</div>
<div class="a" style="left:231px;top:479px;width:1328px;height:1px;background:#4e4e4e;"></div>
<div class="t" style="top:459.91px;font-size:15.7px;color:#d4d4d4;left:250px;transform:translateX(-50%);transform-origin:center 50%;">3</div>
<div class="t" style="top:459.57px;font-size:13.5px;color:#ffffff;font-style:italic;right:1572.5px;-webkit-text-stroke:0.3px #fff;">111</div>
<div class="t" style="top:459.57px;font-size:13.5px;color:#ffffff;font-style:italic;right:1371.5px;-webkit-text-stroke:0.3px #fff;">50</div>
<div class="t" style="top:459.57px;font-size:13.5px;color:#ffffff;font-style:italic;right:1170.5px;-webkit-text-stroke:0.3px #fff;">1</div>
<div class="t" style="top:459.57px;font-size:13.5px;color:#f2f2f2;left:759px;">18-23</div>
<div class="t" style="top:459.57px;font-size:13.5px;color:#ffffff;font-style:italic;right:768.5px;-webkit-text-stroke:0.3px #fff;">2003</div>
<div class="t" style="top:459.57px;font-size:13.5px;color:#ffffff;font-style:italic;right:567.5px;-webkit-text-stroke:0.3px #fff;">19</div>
<div class="t" style="top:459.57px;font-size:13.5px;color:#ffffff;font-style:italic;right:366.5px;-webkit-text-stroke:0.3px #fff;">0</div>
<div class="a" style="left:231px;top:505px;width:1328px;height:1px;background:#4e4e4e;"></div>
<div class="t" style="top:485.91px;font-size:15.7px;color:#d4d4d4;left:250px;transform:translateX(-50%);transform-origin:center 50%;">4</div>
<div class="t" style="top:485.57px;font-size:13.5px;color:#ffffff;font-style:italic;right:1572.5px;-webkit-text-stroke:0.3px #fff;">77</div>
<div class="t" style="top:485.57px;font-size:13.5px;color:#ffffff;font-style:italic;right:1371.5px;-webkit-text-stroke:0.3px #fff;">30</div>
<div class="t" style="top:485.57px;font-size:13.5px;color:#ffffff;font-style:italic;right:1170.5px;-webkit-text-stroke:0.3px #fff;">1</div>
<div class="t" style="top:485.57px;font-size:13.5px;color:#f2f2f2;left:759px;">18-23</div>
<div class="t" style="top:485.57px;font-size:13.5px;color:#ffffff;font-style:italic;right:768.5px;-webkit-text-stroke:0.3px #fff;">2003</div>
<div class="t" style="top:485.57px;font-size:13.5px;color:#ffffff;font-style:italic;right:567.5px;-webkit-text-stroke:0.3px #fff;">20</div>
<div class="t" style="top:485.57px;font-size:13.5px;color:#ffffff;font-style:italic;right:366.5px;-webkit-text-stroke:0.3px #fff;">0</div>
<div class="a" style="left:231px;top:532px;width:1328px;height:1px;background:#4e4e4e;"></div>
<div class="t" style="top:512.91px;font-size:15.7px;color:#d4d4d4;left:250px;transform:translateX(-50%);transform-origin:center 50%;">5</div>
<div class="t" style="top:512.57px;font-size:13.5px;color:#ffffff;font-style:italic;right:1572.5px;-webkit-text-stroke:0.3px #fff;">100</div>
<div class="t" style="top:512.57px;font-size:13.5px;color:#ffffff;font-style:italic;right:1371.5px;-webkit-text-stroke:0.3px #fff;">50</div>
<div class="t" style="top:512.57px;font-size:13.5px;color:#ffffff;font-style:italic;right:1170.5px;-webkit-text-stroke:0.3px #fff;">1</div>
<div class="t" style="top:512.57px;font-size:13.5px;color:#f2f2f2;left:759px;">18-23</div>
<div class="t" style="top:512.57px;font-size:13.5px;color:#ffffff;font-style:italic;right:768.5px;-webkit-text-stroke:0.3px #fff;">2005</div>
<div class="t" style="top:512.57px;font-size:13.5px;color:#ffffff;font-style:italic;right:567.5px;-webkit-text-stroke:0.3px #fff;">9</div>
<div class="t" style="top:512.57px;font-size:13.5px;color:#ffffff;font-style:italic;right:366.5px;-webkit-text-stroke:0.3px #fff;">0</div>
<div class="a" style="left:231px;top:558px;width:1328px;height:1px;background:#4e4e4e;"></div>
<div class="t" style="top:538.91px;font-size:15.7px;color:#d4d4d4;left:250px;transform:translateX(-50%);transform-origin:center 50%;">6</div>
<div class="t" style="top:538.57px;font-size:13.5px;color:#ffffff;font-style:italic;right:1572.5px;-webkit-text-stroke:0.3px #fff;">5</div>
<div class="t" style="top:538.57px;font-size:13.5px;color:#ffffff;font-style:italic;right:1371.5px;-webkit-text-stroke:0.3px #fff;">50</div>
<div class="t" style="top:538.57px;font-size:13.5px;color:#ffffff;font-style:italic;right:1170.5px;-webkit-text-stroke:0.3px #fff;">0</div>
<div class="t" style="top:538.57px;font-size:13.5px;color:#f2f2f2;left:759px;">18-23</div>
<div class="t" style="top:538.57px;font-size:13.5px;color:#ffffff;font-style:italic;right:768.5px;-webkit-text-stroke:0.3px #fff;">2023</div>
<div class="t" style="top:538.57px;font-size:13.5px;color:#ffffff;font-style:italic;right:567.5px;-webkit-text-stroke:0.3px #fff;">20</div>
<div class="t" style="top:538.57px;font-size:13.5px;color:#ffffff;font-style:italic;right:366.5px;-webkit-text-stroke:0.3px #fff;">0</div>
<div class="a" style="left:231px;top:585px;width:1328px;height:1px;background:#4e4e4e;"></div>
<div class="t" style="top:565.91px;font-size:15.7px;color:#d4d4d4;left:250px;transform:translateX(-50%);transform-origin:center 50%;">7</div>
<div class="t" style="top:565.57px;font-size:13.5px;color:#ffffff;font-style:italic;right:1572.5px;-webkit-text-stroke:0.3px #fff;">7</div>
<div class="t" style="top:565.57px;font-size:13.5px;color:#ffffff;font-style:italic;right:1371.5px;-webkit-text-stroke:0.3px #fff;">50</div>
<div class="t" style="top:565.57px;font-size:13.5px;color:#ffffff;font-style:italic;right:1170.5px;-webkit-text-stroke:0.3px #fff;">0</div>
<div class="t" style="top:565.57px;font-size:13.5px;color:#f2f2f2;left:759px;">18-23</div>
<div class="t" style="top:565.57px;font-size:13.5px;color:#ffffff;font-style:italic;right:768.5px;-webkit-text-stroke:0.3px #fff;">2003</div>
<div class="t" style="top:565.57px;font-size:13.5px;color:#ffffff;font-style:italic;right:567.5px;-webkit-text-stroke:0.3px #fff;">11</div>
<div class="t" style="top:565.57px;font-size:13.5px;color:#ffffff;font-style:italic;right:366.5px;-webkit-text-stroke:0.3px #fff;">0</div>
<div class="a" style="left:231px;top:611px;width:1328px;height:1px;background:#4e4e4e;"></div>
<div class="t" style="top:591.91px;font-size:15.7px;color:#d4d4d4;left:250px;transform:translateX(-50%);transform-origin:center 50%;">8</div>
<div class="t" style="top:591.57px;font-size:13.5px;color:#ffffff;font-style:italic;right:1572.5px;-webkit-text-stroke:0.3px #fff;">0</div>
<div class="t" style="top:591.57px;font-size:13.5px;color:#ffffff;font-style:italic;right:1371.5px;-webkit-text-stroke:0.3px #fff;">80</div>
<div class="t" style="top:591.57px;font-size:13.5px;color:#ffffff;font-style:italic;right:1170.5px;-webkit-text-stroke:0.3px #fff;">0</div>
<div class="t" style="top:591.57px;font-size:13.5px;color:#f2f2f2;left:759px;">18-23</div>
<div class="t" style="top:591.57px;font-size:13.5px;color:#ffffff;font-style:italic;right:768.5px;-webkit-text-stroke:0.3px #fff;">2008</div>
<div class="t" style="top:591.57px;font-size:13.5px;color:#ffffff;font-style:italic;right:567.5px;-webkit-text-stroke:0.3px #fff;">12</div>
<div class="t" style="top:591.57px;font-size:13.5px;color:#ffffff;font-style:italic;right:366.5px;-webkit-text-stroke:0.3px #fff;">610</div>
<div class="a" style="left:231px;top:637px;width:1328px;height:1px;background:#4e4e4e;"></div>
<div class="t" style="top:617.91px;font-size:15.7px;color:#d4d4d4;left:250px;transform:translateX(-50%);transform-origin:center 50%;">9</div>
<div class="t" style="top:617.57px;font-size:13.5px;color:#ffffff;font-style:italic;right:1572.5px;-webkit-text-stroke:0.3px #fff;">4</div>
<div class="t" style="top:617.57px;font-size:13.5px;color:#ffffff;font-style:italic;right:1371.5px;-webkit-text-stroke:0.3px #fff;">80</div>
<div class="t" style="top:617.57px;font-size:13.5px;color:#ffffff;font-style:italic;right:1170.5px;-webkit-text-stroke:0.3px #fff;">1</div>
<div class="t" style="top:617.57px;font-size:13.5px;color:#f2f2f2;left:759px;">18-23</div>
<div class="t" style="top:617.57px;font-size:13.5px;color:#ffffff;font-style:italic;right:768.5px;-webkit-text-stroke:0.3px #fff;">2008</div>
<div class="t" style="top:617.57px;font-size:13.5px;color:#ffffff;font-style:italic;right:567.5px;-webkit-text-stroke:0.3px #fff;">15</div>
<div class="t" style="top:617.57px;font-size:13.5px;color:#ffffff;font-style:italic;right:366.5px;-webkit-text-stroke:0.3px #fff;">640</div>
<div class="a" style="left:231px;top:664px;width:1328px;height:1px;background:#4e4e4e;"></div>
<div class="t" style="top:644.91px;font-size:15.7px;color:#d4d4d4;left:250px;transform:translateX(-50%);transform-origin:center 50%;">10</div>
<div class="t" style="top:644.57px;font-size:13.5px;color:#ffffff;font-style:italic;right:1572.5px;-webkit-text-stroke:0.3px #fff;">6</div>
<div class="t" style="top:644.57px;font-size:13.5px;color:#ffffff;font-style:italic;right:1371.5px;-webkit-text-stroke:0.3px #fff;">80</div>
<div class="t" style="top:644.57px;font-size:13.5px;color:#ffffff;font-style:italic;right:1170.5px;-webkit-text-stroke:0.3px #fff;">1</div>
<div class="t" style="top:644.57px;font-size:13.5px;color:#f2f2f2;left:759px;">18-23</div>
<div class="t" style="top:644.57px;font-size:13.5px;color:#ffffff;font-style:italic;right:768.5px;-webkit-text-stroke:0.3px #fff;">2007</div>
<div class="t" style="top:644.57px;font-size:13.5px;color:#ffffff;font-style:italic;right:567.5px;-webkit-text-stroke:0.3px #fff;">19</div>
<div class="t" style="top:644.57px;font-size:13.5px;color:#ffffff;font-style:italic;right:366.5px;-webkit-text-stroke:0.3px #fff;">1095</div>
<div class="a" style="left:231px;top:690px;width:1328px;height:1px;background:#4e4e4e;"></div>
<div class="t" style="top:670.91px;font-size:15.7px;color:#d4d4d4;left:250px;transform:translateX(-50%);transform-origin:center 50%;">11</div>
<div class="t" style="top:670.57px;font-size:13.5px;color:#ffffff;font-style:italic;right:1572.5px;-webkit-text-stroke:0.3px #fff;">85</div>
<div class="t" style="top:670.57px;font-size:13.5px;color:#ffffff;font-style:italic;right:1371.5px;-webkit-text-stroke:0.3px #fff;">80</div>
<div class="t" style="top:670.57px;font-size:13.5px;color:#ffffff;font-style:italic;right:1170.5px;-webkit-text-stroke:0.3px #fff;">1</div>
<div class="t" style="top:670.57px;font-size:13.5px;color:#f2f2f2;left:759px;">18-23</div>
<div class="t" style="top:670.57px;font-size:13.5px;color:#ffffff;font-style:italic;right:768.5px;-webkit-text-stroke:0.3px #fff;">2007</div>
<div class="t" style="top:670.57px;font-size:13.5px;color:#ffffff;font-style:italic;right:567.5px;-webkit-text-stroke:0.3px #fff;">18</div>
<div class="t" style="top:670.57px;font-size:13.5px;color:#ffffff;font-style:italic;right:366.5px;-webkit-text-stroke:0.3px #fff;">1050</div>
<div class="a" style="left:231px;top:716px;width:1328px;height:1px;background:#4e4e4e;"></div>
<div class="t" style="top:696.91px;font-size:15.7px;color:#d4d4d4;left:250px;transform:translateX(-50%);transform-origin:center 50%;">12</div>
<div class="t" style="top:696.57px;font-size:13.5px;color:#ffffff;font-style:italic;right:1572.5px;-webkit-text-stroke:0.3px #fff;">14</div>
<div class="t" style="top:696.57px;font-size:13.5px;color:#ffffff;font-style:italic;right:1371.5px;-webkit-text-stroke:0.3px #fff;">50</div>
<div class="t" style="top:696.57px;font-size:13.5px;color:#ffffff;font-style:italic;right:1170.5px;-webkit-text-stroke:0.3px #fff;">0</div>
<div class="t" style="top:696.57px;font-size:13.5px;color:#f2f2f2;left:759px;">18-23</div>
<div class="t" style="top:696.57px;font-size:13.5px;color:#ffffff;font-style:italic;right:768.5px;-webkit-text-stroke:0.3px #fff;">2005</div>
<div class="t" style="top:696.57px;font-size:13.5px;color:#ffffff;font-style:italic;right:567.5px;-webkit-text-stroke:0.3px #fff;">8</div>
<div class="t" style="top:696.57px;font-size:13.5px;color:#ffffff;font-style:italic;right:366.5px;-webkit-text-stroke:0.3px #fff;">0</div>
<div class="a" style="left:231px;top:743px;width:1328px;height:1px;background:#4e4e4e;"></div>
<div class="t" style="top:723.91px;font-size:15.7px;color:#d4d4d4;left:250px;transform:translateX(-50%);transform-origin:center 50%;">13</div>
<div class="t" style="top:723.57px;font-size:13.5px;color:#ffffff;font-style:italic;right:1572.5px;-webkit-text-stroke:0.3px #fff;">116</div>
<div class="t" style="top:723.57px;font-size:13.5px;color:#ffffff;font-style:italic;right:1371.5px;-webkit-text-stroke:0.3px #fff;">60</div>
<div class="t" style="top:723.57px;font-size:13.5px;color:#ffffff;font-style:italic;right:1170.5px;-webkit-text-stroke:0.3px #fff;">1</div>
<div class="t" style="top:723.57px;font-size:13.5px;color:#f2f2f2;left:759px;">18-23</div>
<div class="t" style="top:723.57px;font-size:13.5px;color:#ffffff;font-style:italic;right:768.5px;-webkit-text-stroke:0.3px #fff;">2006</div>
<div class="t" style="top:723.57px;font-size:13.5px;color:#ffffff;font-style:italic;right:567.5px;-webkit-text-stroke:0.3px #fff;">25</div>
<div class="t" style="top:723.57px;font-size:13.5px;color:#ffffff;font-style:italic;right:366.5px;-webkit-text-stroke:0.3px #fff;">0</div>
<div class="a" style="left:231px;top:769px;width:1328px;height:1px;background:#4e4e4e;"></div>
<div class="t" style="top:749.91px;font-size:15.7px;color:#d4d4d4;left:250px;transform:translateX(-50%);transform-origin:center 50%;">14</div>
<div class="t" style="top:749.57px;font-size:13.5px;color:#ffffff;font-style:italic;right:1572.5px;-webkit-text-stroke:0.3px #fff;">2</div>
<div class="t" style="top:749.57px;font-size:13.5px;color:#ffffff;font-style:italic;right:1371.5px;-webkit-text-stroke:0.3px #fff;">80</div>
<div class="t" style="top:749.57px;font-size:13.5px;color:#ffffff;font-style:italic;right:1170.5px;-webkit-text-stroke:0.3px #fff;">0</div>
<div class="t" style="top:749.57px;font-size:13.5px;color:#f2f2f2;left:759px;">24-29</div>
<div class="t" style="top:749.57px;font-size:13.5px;color:#ffffff;font-style:italic;right:768.5px;-webkit-text-stroke:0.3px #fff;">2006</div>
<div class="t" style="top:749.57px;font-size:13.5px;color:#ffffff;font-style:italic;right:567.5px;-webkit-text-stroke:0.3px #fff;">24</div>
<div class="t" style="top:749.57px;font-size:13.5px;color:#ffffff;font-style:italic;right:366.5px;-webkit-text-stroke:0.3px #fff;">1750</div>
<div class="a" style="left:231px;top:795px;width:1328px;height:1px;background:#4e4e4e;"></div>
<div class="t" style="top:775.91px;font-size:15.7px;color:#d4d4d4;left:250px;transform:translateX(-50%);transform-origin:center 50%;">15</div>
<div class="t" style="top:775.57px;font-size:13.5px;color:#ffffff;font-style:italic;right:1572.5px;-webkit-text-stroke:0.3px #fff;">7</div>
<div class="t" style="top:775.57px;font-size:13.5px;color:#ffffff;font-style:italic;right:1371.5px;-webkit-text-stroke:0.3px #fff;">50</div>
<div class="t" style="top:775.57px;font-size:13.5px;color:#ffffff;font-style:italic;right:1170.5px;-webkit-text-stroke:0.3px #fff;">0</div>
<div class="t" style="top:775.57px;font-size:13.5px;color:#f2f2f2;left:759px;">24-29</div>
<div class="t" style="top:775.57px;font-size:13.5px;color:#ffffff;font-style:italic;right:768.5px;-webkit-text-stroke:0.3px #fff;">2007</div>
<div class="t" style="top:775.57px;font-size:13.5px;color:#ffffff;font-style:italic;right:567.5px;-webkit-text-stroke:0.3px #fff;">3</div>
<div class="t" style="top:775.57px;font-size:13.5px;color:#ffffff;font-style:italic;right:366.5px;-webkit-text-stroke:0.3px #fff;">0</div>
<div class="a" style="left:231px;top:822px;width:1328px;height:1px;background:#4e4e4e;"></div>
<div class="t" style="top:802.91px;font-size:15.7px;color:#d4d4d4;left:250px;transform:translateX(-50%);transform-origin:center 50%;">16</div>
<div class="t" style="top:802.57px;font-size:13.5px;color:#ffffff;font-style:italic;right:1572.5px;-webkit-text-stroke:0.3px #fff;">3</div>
<div class="t" style="top:802.57px;font-size:13.5px;color:#ffffff;font-style:italic;right:1371.5px;-webkit-text-stroke:0.3px #fff;">50</div>
<div class="t" style="top:802.57px;font-size:13.5px;color:#ffffff;font-style:italic;right:1170.5px;-webkit-text-stroke:0.3px #fff;">0</div>
<div class="t" style="top:802.57px;font-size:13.5px;color:#f2f2f2;left:759px;">24-29</div>
<div class="t" style="top:802.57px;font-size:13.5px;color:#ffffff;font-style:italic;right:768.5px;-webkit-text-stroke:0.3px #fff;">2007</div>
<div class="t" style="top:802.57px;font-size:13.5px;color:#ffffff;font-style:italic;right:567.5px;-webkit-text-stroke:0.3px #fff;">17</div>
<div class="t" style="top:802.57px;font-size:13.5px;color:#ffffff;font-style:italic;right:366.5px;-webkit-text-stroke:0.3px #fff;">0</div>
<div class="a" style="left:231px;top:848px;width:1328px;height:1px;background:#4e4e4e;"></div>
<div class="t" style="top:828.91px;font-size:15.7px;color:#d4d4d4;left:250px;transform:translateX(-50%);transform-origin:center 50%;">17</div>
<div class="t" style="top:828.57px;font-size:13.5px;color:#ffffff;font-style:italic;right:1572.5px;-webkit-text-stroke:0.3px #fff;">10</div>
<div class="t" style="top:828.57px;font-size:13.5px;color:#ffffff;font-style:italic;right:1371.5px;-webkit-text-stroke:0.3px #fff;">80</div>
<div class="t" style="top:828.57px;font-size:13.5px;color:#ffffff;font-style:italic;right:1170.5px;-webkit-text-stroke:0.3px #fff;">0</div>
<div class="t" style="top:828.57px;font-size:13.5px;color:#f2f2f2;left:759px;">24-29</div>
<div class="t" style="top:828.57px;font-size:13.5px;color:#ffffff;font-style:italic;right:768.5px;-webkit-text-stroke:0.3px #fff;">2004</div>
<div class="t" style="top:828.57px;font-size:13.5px;color:#ffffff;font-style:italic;right:567.5px;-webkit-text-stroke:0.3px #fff;">22</div>
<div class="t" style="top:828.57px;font-size:13.5px;color:#ffffff;font-style:italic;right:366.5px;-webkit-text-stroke:0.3px #fff;">3300</div>
<div class="a" style="left:231px;top:874px;width:1328px;height:1px;background:#4e4e4e;"></div>
<div class="t" style="top:854.91px;font-size:15.7px;color:#d4d4d4;left:250px;transform:translateX(-50%);transform-origin:center 50%;">18</div>
<div class="t" style="top:854.57px;font-size:13.5px;color:#ffffff;font-style:italic;right:1572.5px;-webkit-text-stroke:0.3px #fff;">9</div>
<div class="t" style="top:854.57px;font-size:13.5px;color:#ffffff;font-style:italic;right:1371.5px;-webkit-text-stroke:0.3px #fff;">80</div>
<div class="t" style="top:854.57px;font-size:13.5px;color:#ffffff;font-style:italic;right:1170.5px;-webkit-text-stroke:0.3px #fff;">0</div>
<div class="t" style="top:854.57px;font-size:13.5px;color:#f2f2f2;left:759px;">24-29</div>
<div class="t" style="top:854.57px;font-size:13.5px;color:#ffffff;font-style:italic;right:768.5px;-webkit-text-stroke:0.3px #fff;">2007</div>
<div class="t" style="top:854.57px;font-size:13.5px;color:#ffffff;font-style:italic;right:567.5px;-webkit-text-stroke:0.3px #fff;">4</div>
<div class="t" style="top:854.57px;font-size:13.5px;color:#ffffff;font-style:italic;right:366.5px;-webkit-text-stroke:0.3px #fff;">1050</div>
<div class="a" style="left:231px;top:901px;width:1328px;height:1px;background:#4e4e4e;"></div>
<div class="t" style="top:881.91px;font-size:15.7px;color:#d4d4d4;left:250px;transform:translateX(-50%);transform-origin:center 50%;">19</div>
<div class="t" style="top:881.57px;font-size:13.5px;color:#ffffff;font-style:italic;right:1572.5px;-webkit-text-stroke:0.3px #fff;">3</div>
<div class="t" style="top:881.57px;font-size:13.5px;color:#ffffff;font-style:italic;right:1371.5px;-webkit-text-stroke:0.3px #fff;">80</div>
<div class="t" style="top:881.57px;font-size:13.5px;color:#ffffff;font-style:italic;right:1170.5px;-webkit-text-stroke:0.3px #fff;">1</div>
<div class="t" style="top:881.57px;font-size:13.5px;color:#f2f2f2;left:759px;">24-29</div>
<div class="t" style="top:881.57px;font-size:13.5px;color:#ffffff;font-style:italic;right:768.5px;-webkit-text-stroke:0.3px #fff;">2005</div>
<div class="t" style="top:881.57px;font-size:13.5px;color:#ffffff;font-style:italic;right:567.5px;-webkit-text-stroke:0.3px #fff;">4</div>
<div class="t" style="top:881.57px;font-size:13.5px;color:#ffffff;font-style:italic;right:366.5px;-webkit-text-stroke:0.3px #fff;">3600</div>
<div class="a" style="left:231px;top:927px;width:1328px;height:1px;background:#4e4e4e;"></div>
<div class="t" style="top:907.91px;font-size:15.7px;color:#d4d4d4;left:250px;transform:translateX(-50%);transform-origin:center 50%;">20</div>
<div class="t" style="top:907.57px;font-size:13.5px;color:#ffffff;font-style:italic;right:1572.5px;-webkit-text-stroke:0.3px #fff;">3</div>
<div class="t" style="top:907.57px;font-size:13.5px;color:#ffffff;font-style:italic;right:1371.5px;-webkit-text-stroke:0.3px #fff;">80</div>
<div class="t" style="top:907.57px;font-size:13.5px;color:#ffffff;font-style:italic;right:1170.5px;-webkit-text-stroke:0.3px #fff;">0</div>
<div class="t" style="top:907.57px;font-size:13.5px;color:#f2f2f2;left:759px;">24-29</div>
<div class="t" style="top:907.57px;font-size:13.5px;color:#ffffff;font-style:italic;right:768.5px;-webkit-text-stroke:0.3px #fff;">2008</div>
<div class="t" style="top:907.57px;font-size:13.5px;color:#ffffff;font-style:italic;right:567.5px;-webkit-text-stroke:0.3px #fff;">16</div>
<div class="t" style="top:907.57px;font-size:13.5px;color:#ffffff;font-style:italic;right:366.5px;-webkit-text-stroke:0.3px #fff;">680</div>
<div class="a" style="left:231px;top:954px;width:1328px;height:1px;background:#4e4e4e;"></div>
<div class="t" style="top:934.91px;font-size:15.7px;color:#d4d4d4;left:250px;transform:translateX(-50%);transform-origin:center 50%;">21</div>
<div class="t" style="top:934.57px;font-size:13.5px;color:#ffffff;font-style:italic;right:1572.5px;-webkit-text-stroke:0.3px #fff;">0</div>
<div class="t" style="top:934.57px;font-size:13.5px;color:#ffffff;font-style:italic;right:1371.5px;-webkit-text-stroke:0.3px #fff;">80</div>
<div class="t" style="top:934.57px;font-size:13.5px;color:#ffffff;font-style:italic;right:1170.5px;-webkit-text-stroke:0.3px #fff;">0</div>
<div class="t" style="top:934.57px;font-size:13.5px;color:#f2f2f2;left:759px;">24-29</div>
<div class="t" style="top:934.57px;font-size:13.5px;color:#ffffff;font-style:italic;right:768.5px;-webkit-text-stroke:0.3px #fff;">2005</div>
<div class="t" style="top:934.57px;font-size:13.5px;color:#ffffff;font-style:italic;right:567.5px;-webkit-text-stroke:0.3px #fff;">3</div>
<div class="t" style="top:934.57px;font-size:13.5px;color:#ffffff;font-style:italic;right:366.5px;-webkit-text-stroke:0.3px #fff;">4050</div>
<div class="a" style="left:231px;top:980px;width:1328px;height:1px;background:#4e4e4e;"></div>
<div class="t" style="top:960.91px;font-size:15.7px;color:#d4d4d4;left:250px;transform:translateX(-50%);transform-origin:center 50%;">22</div>
<div class="t" style="top:960.57px;font-size:13.5px;color:#ffffff;font-style:italic;right:1572.5px;-webkit-text-stroke:0.3px #fff;">0</div>
<div class="t" style="top:960.57px;font-size:13.5px;color:#ffffff;font-style:italic;right:1371.5px;-webkit-text-stroke:0.3px #fff;">50</div>
<div class="t" style="top:960.57px;font-size:13.5px;color:#ffffff;font-style:italic;right:1170.5px;-webkit-text-stroke:0.3px #fff;">1</div>
<div class="t" style="top:960.57px;font-size:13.5px;color:#f2f2f2;left:759px;">24-29</div>
<div class="t" style="top:960.57px;font-size:13.5px;color:#ffffff;font-style:italic;right:768.5px;-webkit-text-stroke:0.3px #fff;">2006</div>
<div class="t" style="top:960.57px;font-size:13.5px;color:#ffffff;font-style:italic;right:567.5px;-webkit-text-stroke:0.3px #fff;">7</div>
<div class="t" style="top:960.57px;font-size:13.5px;color:#ffffff;font-style:italic;right:366.5px;-webkit-text-stroke:0.3px #fff;">0</div>
<div class="a" style="left:268px;top:981px;width:1291px;height:21px;background:#1e1e1e;"></div>
<div class="t" style="top:987.31px;font-size:15.7px;color:#d4d4d4;left:250px;transform:translateX(-50%);transform-origin:center 50%;">23</div>
<div class="a" style="left:231px;top:400px;width:37px;height:1px;background:#4e4e4e;"></div>
<svg class="a" style="left:290px;top:984px;" width="11" height="15" viewBox="0 0 11 15"><path d="M6.5 0H10.5L4.5 7.5L10.5 15H6.5L0.5 7.5Z" fill="#7a7a7a"/></svg>
<div class="a" style="left:1182px;top:982px;width:335px;height:19px;background:#717171;"></div>
<svg class="a" style="left:1528px;top:984px;" width="11" height="15" viewBox="0 0 11 15"><path d="M4 0H0L6 7.5L0 15H4L10 7.5Z" fill="#7a7a7a"/></svg>
<div class="a" style="left:1559px;top:401px;width:22px;height:601px;background:#1e1e1e;"></div>
<svg class="a" style="left:1562px;top:421px;" width="17" height="13" viewBox="0 0 17 13"><path d="M1.8 11.2L8.5 3.5L15.2 11.2" fill="none" stroke="#767676" stroke-width="3.4"/></svg>
<div class="a" style="left:1561px;top:443px;width:19px;height:217px;background:#6e6e6e;"></div>
<svg class="a" style="left:1562px;top:948px;" width="17" height="13" viewBox="0 0 17 13"><path d="M1.8 1.8L8.5 9.5L15.2 1.8" fill="none" stroke="#767676" stroke-width="3.4"/></svg>
<div class="t" style="top:227.06px;font-size:18px;color:#e8e8e8;left:1601px;transform:scaleX(0.9071);transform-origin:left 50%;">Query Settings</div>
<svg class="a" style="left:1873px;top:229px;" width="14" height="14" viewBox="0 0 14 14"><path d="M0.5 0.5L13.5 13.5M13.5 0.5L0.5 13.5" stroke="#fff" stroke-width="1.4"/></svg>
<svg class="a" style="left:1600px;top:270px;" width="8" height="8" viewBox="0 0 8 8"><path d="M8 0V8H0Z" fill="#fff"/></svg>
<div class="t" style="top:268.65px;font-size:14px;color:#fff;font-weight:700;left:1617px;transform:scaleX(0.9641);transform-origin:left 50%;">PROPERTIES</div>
<div class="t" style="top:294.30px;font-size:15px;color:#f0f0f0;left:1617px;">Name</div>
<div class="a" style="left:1616px;top:314px;width:274px;height:26px;border:1px solid #6a6a6a;"></div>
<div class="t" style="top:320.30px;font-size:15px;color:#f0f0f0;left:1624px;">Employees</div>
<div class="t" style="top:353.30px;font-size:15px;color:#3fb99b;left:1617px;">All Properties</div>
<svg class="a" style="left:1600px;top:397px;" width="8" height="8" viewBox="0 0 8 8"><path d="M8 0V8H0Z" fill="#fff"/></svg>
<div class="t" style="top:395.65px;font-size:14px;color:#fff;font-weight:700;left:1617px;transform:scaleX(0.9777);transform-origin:left 50%;">APPLIED STEPS</div>
<div class="a" style="left:1616px;top:420px;width:274px;height:551px;border:1px solid #5a5a5a;"></div>
<div class="a" style="left:1617px;top:947px;width:250px;height:23px;background:#6b6b6b;"></div>
<div class="a" style="left:1617px;top:947px;width:3px;height:23px;background:#2e8b57;"></div>
<div class="t" style="top:426.30px;font-size:15px;color:#f4f4f4;left:1645.5px;">Source</div>
<svg class="a" style="left:1844px;top:425.5px;" width="14" height="14" viewBox="0 0 14 14"><g transform="translate(7,7)" fill="#fff"><circle cx="0" cy="-4.4" r="2.5"/><circle cx="3.8" cy="-2.2" r="2.5"/><circle cx="3.8" cy="2.2" r="2.5"/><circle cx="0" cy="4.4" r="2.5"/><circle cx="-3.8" cy="2.2" r="2.5"/><circle cx="-3.8" cy="-2.2" r="2.5"/><circle r="4.2"/><circle r="1.9" fill="#282828"/></g></svg>
<div class="t" style="top:451.40px;font-size:15px;color:#f4f4f4;left:1645.5px;">Navigation</div>
<svg class="a" style="left:1844px;top:450.6px;" width="14" height="14" viewBox="0 0 14 14"><g transform="translate(7,7)" fill="#fff"><circle cx="0" cy="-4.4" r="2.5"/><circle cx="3.8" cy="-2.2" r="2.5"/><circle cx="3.8" cy="2.2" r="2.5"/><circle cx="0" cy="4.4" r="2.5"/><circle cx="-3.8" cy="2.2" r="2.5"/><circle cx="-3.8" cy="-2.2" r="2.5"/><circle r="4.2"/><circle r="1.9" fill="#282828"/></g></svg>
<div class="t" style="top:476.50px;font-size:15px;color:#f4f4f4;left:1645.5px;">Promoted Headers</div>
<svg class="a" style="left:1844px;top:475.7px;" width="14" height="14" viewBox="0 0 14 14"><g transform="translate(7,7)" fill="#fff"><circle cx="0" cy="-4.4" r="2.5"/><circle cx="3.8" cy="-2.2" r="2.5"/><circle cx="3.8" cy="2.2" r="2.5"/><circle cx="0" cy="4.4" r="2.5"/><circle cx="-3.8" cy="2.2" r="2.5"/><circle cx="-3.8" cy="-2.2" r="2.5"/><circle r="4.2"/><circle r="1.9" fill="#282828"/></g></svg>
<div class="t" style="top:501.60px;font-size:15px;color:#f4f4f4;left:1645.5px;">Changed Type</div>
<div class="t" style="top:526.70px;font-size:15px;color:#f4f4f4;left:1645.5px;">Inserted Merged Column</div>
<svg class="a" style="left:1844px;top:525.9px;" width="14" height="14" viewBox="0 0 14 14"><g transform="translate(7,7)" fill="#fff"><circle cx="0" cy="-4.4" r="2.5"/><circle cx="3.8" cy="-2.2" r="2.5"/><circle cx="3.8" cy="2.2" r="2.5"/><circle cx="0" cy="4.4" r="2.5"/><circle cx="-3.8" cy="2.2" r="2.5"/><circle cx="-3.8" cy="-2.2" r="2.5"/><circle r="4.2"/><circle r="1.9" fill="#282828"/></g></svg>
<div class="t" style="top:551.80px;font-size:15px;color:#f4f4f4;left:1645.5px;">Reordered Columns</div>
<div class="t" style="top:576.90px;font-size:15px;color:#f4f4f4;left:1645.5px;">Removed Columns</div>
<div class="t" style="top:602.00px;font-size:15px;color:#f4f4f4;left:1645.5px;">Added Conditional Column</div>
<svg class="a" style="left:1844px;top:601.2px;" width="14" height="14" viewBox="0 0 14 14"><g transform="translate(7,7)" fill="#fff"><circle cx="0" cy="-4.4" r="2.5"/><circle cx="3.8" cy="-2.2" r="2.5"/><circle cx="3.8" cy="2.2" r="2.5"/><circle cx="0" cy="4.4" r="2.5"/><circle cx="-3.8" cy="2.2" r="2.5"/><circle cx="-3.8" cy="-2.2" r="2.5"/><circle r="4.2"/><circle r="1.9" fill="#282828"/></g></svg>
<div class="t" style="top:627.10px;font-size:15px;color:#f4f4f4;left:1645.5px;">Changed Type1</div>
<div class="t" style="top:652.20px;font-size:15px;color:#f4f4f4;left:1645.5px;">Removed Columns1</div>
<div class="t" style="top:677.30px;font-size:15px;color:#f4f4f4;left:1645.5px;">Renamed Columns</div>
<div class="t" style="top:702.40px;font-size:15px;color:#f4f4f4;left:1645.5px;">Changed Type2</div>
<div class="t" style="top:727.50px;font-size:15px;color:#f4f4f4;left:1645.5px;">Added Conditional Column1</div>
<svg class="a" style="left:1844px;top:726.7px;" width="14" height="14" viewBox="0 0 14 14"><g transform="translate(7,7)" fill="#fff"><circle cx="0" cy="-4.4" r="2.5"/><circle cx="3.8" cy="-2.2" r="2.5"/><circle cx="3.8" cy="2.2" r="2.5"/><circle cx="0" cy="4.4" r="2.5"/><circle cx="-3.8" cy="2.2" r="2.5"/><circle cx="-3.8" cy="-2.2" r="2.5"/><circle r="4.2"/><circle r="1.9" fill="#282828"/></g></svg>
<div class="t" style="top:752.60px;font-size:15px;color:#f4f4f4;left:1645.5px;">Sorted Rows</div>
<div class="t" style="top:777.70px;font-size:15px;color:#f4f4f4;left:1645.5px;">Inserted Year</div>
<svg class="a" style="left:1844px;top:776.9000000000001px;" width="14" height="14" viewBox="0 0 14 14"><g transform="translate(7,7)" fill="#fff"><circle cx="0" cy="-4.4" r="2.5"/><circle cx="3.8" cy="-2.2" r="2.5"/><circle cx="3.8" cy="2.2" r="2.5"/><circle cx="0" cy="4.4" r="2.5"/><circle cx="-3.8" cy="2.2" r="2.5"/><circle cx="-3.8" cy="-2.2" r="2.5"/><circle r="4.2"/><circle r="1.9" fill="#282828"/></g></svg>
<div class="t" style="top:802.80px;font-size:15px;color:#f4f4f4;left:1645.5px;">Changed Type3</div>
<div class="t" style="top:827.90px;font-size:15px;color:#f4f4f4;left:1645.5px;">Replaced Value</div>
<svg class="a" style="left:1844px;top:827.1px;" width="14" height="14" viewBox="0 0 14 14"><g transform="translate(7,7)" fill="#fff"><circle cx="0" cy="-4.4" r="2.5"/><circle cx="3.8" cy="-2.2" r="2.5"/><circle cx="3.8" cy="2.2" r="2.5"/><circle cx="0" cy="4.4" r="2.5"/><circle cx="-3.8" cy="2.2" r="2.5"/><circle cx="-3.8" cy="-2.2" r="2.5"/><circle r="4.2"/><circle r="1.9" fill="#282828"/></g></svg>
<div class="t" style="top:853.00px;font-size:15px;color:#f4f4f4;left:1645.5px;">Changed Type4</div>
<div class="t" style="top:878.10px;font-size:15px;color:#f4f4f4;left:1645.5px;">Added Custom</div>
<svg class="a" style="left:1844px;top:877.3px;" width="14" height="14" viewBox="0 0 14 14"><g transform="translate(7,7)" fill="#fff"><circle cx="0" cy="-4.4" r="2.5"/><circle cx="3.8" cy="-2.2" r="2.5"/><circle cx="3.8" cy="2.2" r="2.5"/><circle cx="0" cy="4.4" r="2.5"/><circle cx="-3.8" cy="2.2" r="2.5"/><circle cx="-3.8" cy="-2.2" r="2.5"/><circle r="4.2"/><circle r="1.9" fill="#282828"/></g></svg>
<div class="t" style="top:903.20px;font-size:15px;color:#f4f4f4;left:1645.5px;">Changed Type5</div>
<div class="t" style="top:928.30px;font-size:15px;color:#f4f4f4;left:1645.5px;">Added Custom1</div>
<svg class="a" style="left:1844px;top:927.5px;" width="14" height="14" viewBox="0 0 14 14"><g transform="translate(7,7)" fill="#fff"><circle cx="0" cy="-4.4" r="2.5"/><circle cx="3.8" cy="-2.2" r="2.5"/><circle cx="3.8" cy="2.2" r="2.5"/><circle cx="0" cy="4.4" r="2.5"/><circle cx="-3.8" cy="2.2" r="2.5"/><circle cx="-3.8" cy="-2.2" r="2.5"/><circle r="4.2"/><circle r="1.9" fill="#282828"/></g></svg>
<div class="t" style="top:953.40px;font-size:15px;color:#f4f4f4;left:1645.5px;">Changed Type6</div>
<svg class="a" style="left:1626px;top:954px;" width="12" height="12" viewBox="0 0 12 12"><path d="M1 1L11 11M11 1L1 11" stroke="#e0e0e0" stroke-width="1.6"/></svg>
<div class="a" style="left:1867px;top:421px;width:22px;height:549px;background:#1e1e1e;"></div>
<svg class="a" style="left:1870px;top:441px;" width="17" height="13" viewBox="0 0 17 13"><path d="M1.8 11.2L8.5 3.5L15.2 11.2" fill="none" stroke="#767676" stroke-width="3.4"/></svg>
<div class="a" style="left:1869px;top:465px;width:19px;height:454px;background:#6e6e6e;"></div>
<svg class="a" style="left:1870px;top:937px;" width="17" height="13" viewBox="0 0 17 13"><path d="M1.8 1.8L8.5 9.5L15.2 1.8" fill="none" stroke="#767676" stroke-width="3.4"/></svg>
<div class="a" style="left:0px;top:1003px;width:1920px;height:27px;background:#272727;"></div>
<div class="a" style="left:0px;top:1002px;width:1920px;height:2px;background:#585858;"></div>
<div class="t" style="top:1010.50px;font-size:13px;color:#dcdcdc;left:7px;transform:scaleX(0.9869);transform-origin:left 50%;">23 COLUMNS, 108 ROWS</div>
<div class="t" style="top:1009.65px;font-size:14px;color:#dcdcdc;left:181px;transform:scaleX(0.9942);transform-origin:left 50%;">Column profiling based on top 1000 rows</div>
<div class="t" style="top:1010.50px;font-size:13px;color:#dcdcdc;right:7px;transform:scaleX(0.9892);transform-origin:right 50%;">PREVIEW DOWNLOADED AT 4:40 AM</div>
<div class="a" style="left:0px;top:1030px;width:1920px;height:50px;background:linear-gradient(90deg,#1c1c1c 0px,#1c1c1c 660px,#27221c 720px,#302920 770px,#2b251e 830px,#1e1c1a 870px,#1c1c1c 1000px,#1c1d20 1080px,#1e2737 1110px,#223047 1170px,#1f2a3d 1225px,#3a3327 1248px,#3a3327 1340px,#2c2721 1370px,#1c1c1c 1405px,#1c1c1c 1920px);"></div>
<svg class="a" style="left:20px;top:1045px;" width="21" height="21" viewBox="0 0 21 21"><path d="M0 3L9 1.7V10H0Z M10 1.5L21 0V10H10Z M0 11H9V19.3L0 18Z M10 11H21V21L10 19.5Z" fill="#fff"/></svg>
<div class="a" style="left:60px;top:1030px;width:360px;height:50px;background:#f0f0f0;"></div>
<svg class="a" style="left:75px;top:1045px;" width="21" height="21" viewBox="0 0 21 21"><circle cx="13" cy="8" r="6.5" fill="none" stroke="#111" stroke-width="1.6"/><path d="M8.5 12.5L1 20" stroke="#111" stroke-width="1.8"/></svg>
<div class="t" style="top:1046.76px;font-size:18px;color:#1a1a1a;left:110px;transform:scaleX(1.0246);transform-origin:left 50%;">Type here to search</div>
<svg class="a" style="left:320px;top:1030px;" width="100" height="50" viewBox="0 0 100 50"><defs><radialGradient id="gw" cx="55" cy="40" r="38" gradientUnits="userSpaceOnUse"><stop offset="0" stop-color="#f4e6b8"/><stop offset="0.4" stop-color="#d0b88a"/><stop offset="0.7" stop-color="#a0b4c4" stop-opacity="0.5"/><stop offset="1" stop-color="#f0f0f0" stop-opacity="0"/></radialGradient>
<clipPath id="sbclip"><rect x="0" y="0" width="99" height="50"/></clipPath></defs>
<g clip-path="url(#sbclip)">
<circle cx="50" cy="45" r="40" fill="#dfe9f2"/>
<path d="M50 45V10A35 35 0 0 0 15 45Z" fill="#80a8dc"/><path d="M50 45V10A35 35 0 0 1 85 45Z" fill="#4cc2b4"/>
<circle cx="50" cy="45" r="40" fill="url(#gw)"/>
<path d="M11 50L38.5 32.3L61.5 41.7L78 34.4L93 50Z" fill="#1b2a7c"/>
</g></svg>
<svg class="a" style="left:439px;top:1044px;" width="22" height="20" viewBox="0 0 22 20"><rect x="2.5" y="4" width="11" height="12" fill="none" stroke="#fff" stroke-width="1.3"/><path d="M0.5 1H15.5M0.5 19H15.5M20 1V7M20 13V19" stroke="#fff" stroke-width="1.3"/><rect x="18.5" y="8.5" width="3" height="3" fill="#fff"/></svg>
<div class="a" style="left:484px;top:1030px;width:56px;height:50px;background:#3a3a3a;"></div>
<div class="a" style="left:540px;top:1030px;width:5px;height:50px;background:#444;"></div>
<div class="a" style="left:484px;top:1077px;width:61px;height:3px;background:#76b9ed;"></div>
<svg class="a" style="left:502px;top:1040px;" width="24" height="30" viewBox="0 0 24 30"><rect x="0" y="15" width="9" height="15" rx="1" fill="#f7d88a"/><rect x="6" y="8" width="10" height="22" rx="1" fill="#f2c230"/><rect x="13" y="0" width="11" height="30" rx="1" fill="#e2a51b"/></svg>
<svg class="a" style="left:561px;top:1042px;" width="31" height="27" viewBox="0 0 31 27"><path d="M10 4L20 0L31 5V24Q31 27 28 27H12Q10 27 10 24Z" fill="#28a8ea"/><path d="M10 5L20 0L31 5L20 12Z" fill="#0f78d4"/><path d="M12 27L31 14V24Q31 27 28 27Z" fill="#50d9ff" opacity="0.6"/><rect x="0" y="6" width="16" height="16" rx="1.5" fill="#0a64c0"/><ellipse cx="8" cy="14" rx="4.3" ry="5" fill="none" stroke="#fff" stroke-width="2.2"/></svg>
<svg class="a" style="left:624px;top:1043px;" width="28" height="24" viewBox="0 0 28 24"><defs><linearGradient id="cp1" x1="0" y1="0" x2="0.4" y2="1"><stop offset="0" stop-color="#2a8cf2"/><stop offset="0.45" stop-color="#4cc97a"/><stop offset="0.75" stop-color="#f2b53a"/><stop offset="1" stop-color="#ee5a3a"/></linearGradient><linearGradient id="cp2" x1="0.2" y1="0" x2="0.8" y2="1"><stop offset="0" stop-color="#3a6ee8"/><stop offset="0.35" stop-color="#b454d8"/><stop offset="0.75" stop-color="#ea5a8a"/><stop offset="1" stop-color="#f6a040"/></linearGradient></defs>
<path d="M7 1Q9 0 12 0H17L9 24H6Q0 24 1 17L3 8Q4 3 7 1Z" fill="url(#cp1)"/><path d="M21 24Q19 24 16 24H10L18 0H22Q28 0 27 7L25 16Q24 22 21 24Z" fill="url(#cp2)"/><path d="M10.5 17L15.5 6" stroke="#1c1c1c" stroke-width="2.2" stroke-linecap="round"/></svg>
<svg class="a" style="left:686px;top:1043px;" width="28" height="23" viewBox="0 0 28 23"><path d="M0 2Q0 0 2 0H9L12 3H26Q28 3 28 5V21Q28 23 26 23H2Q0 23 0 21Z" fill="#f0c050"/><path d="M0 5H28V21Q28 23 26 23H2Q0 23 0 21Z" fill="#f8d477"/><path d="M6 23V15H22V23" fill="none" stroke="#2a7fd4" stroke-width="3.5"/></svg>
<svg class="a" style="left:747px;top:1040px;" width="31" height="30" viewBox="0 0 31 30"><path d="M22 0L31 4.5V25.5L22 30L7 16L2 20L0 18.5V11.5L2 10L7 14L22 0ZM22 8L13 15L22 22Z" fill="#2a9ae0"/><path d="M22 0L31 4.5V25.5L22 30Z" fill="#1f86cf"/></svg>
<svg class="a" style="left:808px;top:1041px;" width="30" height="29" viewBox="0 0 30 29"><path d="M9 6V2Q9 1 10 1H20Q21 1 21 2V6" fill="none" stroke="#1aa0e6" stroke-width="2"/><rect x="0" y="5" width="30" height="24" rx="3" fill="#f4f4f4"/><rect x="9" y="11" width="5.5" height="5.5" fill="#f25022"/><rect x="15.5" y="11" width="5.5" height="5.5" fill="#7fba00"/><rect x="9" y="17.5" width="5.5" height="5.5" fill="#00a4ef"/><rect x="15.5" y="17.5" width="5.5" height="5.5" fill="#ffb900"/></svg>
<svg class="a" style="left:871px;top:1040px;" width="31" height="30" viewBox="0 0 31 30"><defs><linearGradient id="ed" x1="0" y1="0" x2="1" y2="0"><stop offset="0" stop-color="#1f7bd8"/><stop offset="0.6" stop-color="#2fb5e8"/><stop offset="1" stop-color="#6ad36a"/></linearGradient></defs>
<circle cx="15.5" cy="15" r="15" fill="url(#ed)"/><path d="M3 18Q5 28 17 30Q24 30 28 25Q22 28 16 25Q10 22 12 16Q14 12 19 14Q15 10 10 11Q4 12 3 18Z" fill="#1b5fb4"/><circle cx="17" cy="17" r="4" fill="#1c1c1c"/></svg>
<svg class="a" style="left:933px;top:1044px;" width="30" height="22" viewBox="0 0 30 22"><rect x="0" y="0" width="30" height="22" rx="5" fill="#ff0000"/><path d="M12 6V16L20 11Z" fill="#fff"/></svg>
<svg class="a" style="left:995px;top:1041px;" width="28" height="27" viewBox="0 0 28 27"><path d="M7 1L27 4L21 27L1 24Z" fill="#cfe0ef"/><path d="M7 1L27 4L25 10L5 7Z" fill="#e8eef5"/><path d="M3 16L8 8L14 18L6 24Z" fill="#3d78b8" opacity="0.8"/><path d="M21 27L27 4L28 6L22 27Z" fill="#a05040"/></svg>
<div class="a" style="left:985px;top:1077px;width:51px;height:3px;background:#76b9ed;"></div>
<svg class="a" style="left:1057px;top:1040px;" width="32" height="32" viewBox="0 0 32 32"><circle cx="15" cy="15" r="15" fill="#34a853"/><path d="M15 15L2 7.5A15 15 0 0 1 28 7.5Z" fill="#ea4335"/><path d="M15 15L28 7.5A15 15 0 0 1 15 30Z" fill="#fbbc05"/><circle cx="15" cy="15" r="7" fill="#fff"/><circle cx="15" cy="15" r="5.5" fill="#4285f4"/><circle cx="23" cy="23" r="9" fill="#a855c8"/><text x="23" y="27.5" font-family="Liberation Sans" font-size="11" font-weight="700" fill="#f0e0ff" text-anchor="middle">N</text></svg>
<div class="a" style="left:1047px;top:1077px;width:51px;height:3px;background:#76b9ed;"></div>
<svg class="a" style="left:1404px;top:1040px;" width="32" height="30" viewBox="0 0 32 30"><path d="M1 18Q8 22 16 18Q24 12 25 6Q31 14 27 22Q22 30 12 29Q4 28 1 18Z" fill="#e8a83a"/><circle cx="22.5" cy="7.5" r="7" fill="#d41c1c"/><text x="22.5" y="11.3" font-family="Liberation Sans" font-size="10" font-weight="700" fill="#fff" text-anchor="middle">2</text></svg>
<div class="t" style="top:1047.19px;font-size:17.5px;color:#fff;left:1444px;transform:scaleX(0.9463);transform-origin:left 50%;">24°C</div>
<div class="t" style="top:1047.61px;font-size:17px;color:#fff;right:340px;transform:scaleX(1.0517);transform-origin:right 50%;">سماء صافية</div>
<svg class="a" style="left:1612px;top:1051px;" width="17" height="9" viewBox="0 0 17 9"><path d="M1 8L8.5 1L16 8" fill="none" stroke="#fff" stroke-width="1.3"/></svg>
<svg class="a" style="left:1641px;top:1050px;" width="20" height="12" viewBox="0 0 20 12"><rect x="0.6" y="0.6" width="16.8" height="10.8" fill="none" stroke="#fff" stroke-width="1.2"/><rect x="2.5" y="2.5" width="5" height="7" fill="#fff"/><rect x="17.6" y="3.5" width="2" height="5" fill="#fff"/></svg>
<svg class="a" style="left:1669px;top:1046px;" width="22" height="18" viewBox="0 0 22 18"><path d="M1 6H5L11 1V17L5 12H1Z" fill="none" stroke="#fff" stroke-width="1.2"/><path d="M13.5 6.5Q15 9 13.5 11.5M16 4.5Q19 9 16 13.5M18.5 2Q23 9 18.5 16" fill="none" stroke="#fff" stroke-width="1.2"/></svg>
<svg class="a" style="left:1703px;top:1047px;" width="17" height="17" viewBox="0 0 17 17"><path d="M1 16Q1 6 13 1M4.5 16Q5 9 13 5M8 16Q8.5 12 13 9" fill="none" stroke="#fff" stroke-width="1.2"/><circle cx="14" cy="14" r="1.6" fill="#fff"/></svg>
<div class="t" style="top:1049.61px;font-size:17px;color:#fff;left:1747px;transform:translateX(-50%);transform-origin:center 50%;">ع</div>
<div class="t" style="top:1036.56px;font-size:14.7px;color:#fff;left:1811.5px;transform:translateX(-50%) scaleX(0.9781);transform-origin:center 50%;">4:40 AM</div>
<div class="t" style="top:1059.06px;font-size:14.7px;color:#fff;left:1811.5px;transform:translateX(-50%) scaleX(1.0330);transform-origin:center 50%;">9/27/2025</div>
<svg class="a" style="left:1868px;top:1045px;" width="32" height="32" viewBox="0 0 32 32"><path d="M0.5 0.5H20.5V14.5H7L3 18V14.5H0.5Z" fill="#fff"/><path d="M4 4.5H17M4 7.5H17M4 10.5H13" stroke="#1c1c1c" stroke-width="1"/><circle cx="20.5" cy="19.5" r="10" fill="#2a2a2a" stroke="#777" stroke-width="1.2"/><text x="20.5" y="25" font-family="Liberation Sans" font-size="15" fill="#fff" text-anchor="middle">2</text></svg>
<div class="a" style="left:1914px;top:1032px;width:1px;height:48px;background:#555;"></div>
<svg class="a" style="left:840px;top:945px;" width="240" height="115" viewBox="0 0 240 115"><g opacity="0.5">
<g fill="none" stroke="#aaaaaa" stroke-linecap="round" stroke-width="10.5">
<path d="M44.2 12V62"/>
<path d="M26 37Q10 40 10 55Q10 68 30 68Q45 68 60 62.7L213 62.7"/>
<circle cx="81.4" cy="46" r="15.2"/><circle cx="213.4" cy="52.5" r="15.8"/>
<path d="M122 62L127 47M143.7 62L144.2 46M160.6 62L160.6 45M177.5 62L178 40"/>
</g>
<g fill="#aaaaaa"><circle cx="73.3" cy="14" r="6.7"/><circle cx="90" cy="14" r="6.7"/><circle cx="114" cy="28" r="6.7"/><circle cx="130" cy="28" r="6.7"/>
<text x="5.5" y="104.5" font-family="Liberation Sans" font-size="35" font-weight="700" textLength="228" lengthAdjust="spacingAndGlyphs">mostaql.com</text></g></g></svg>
</body></html>
